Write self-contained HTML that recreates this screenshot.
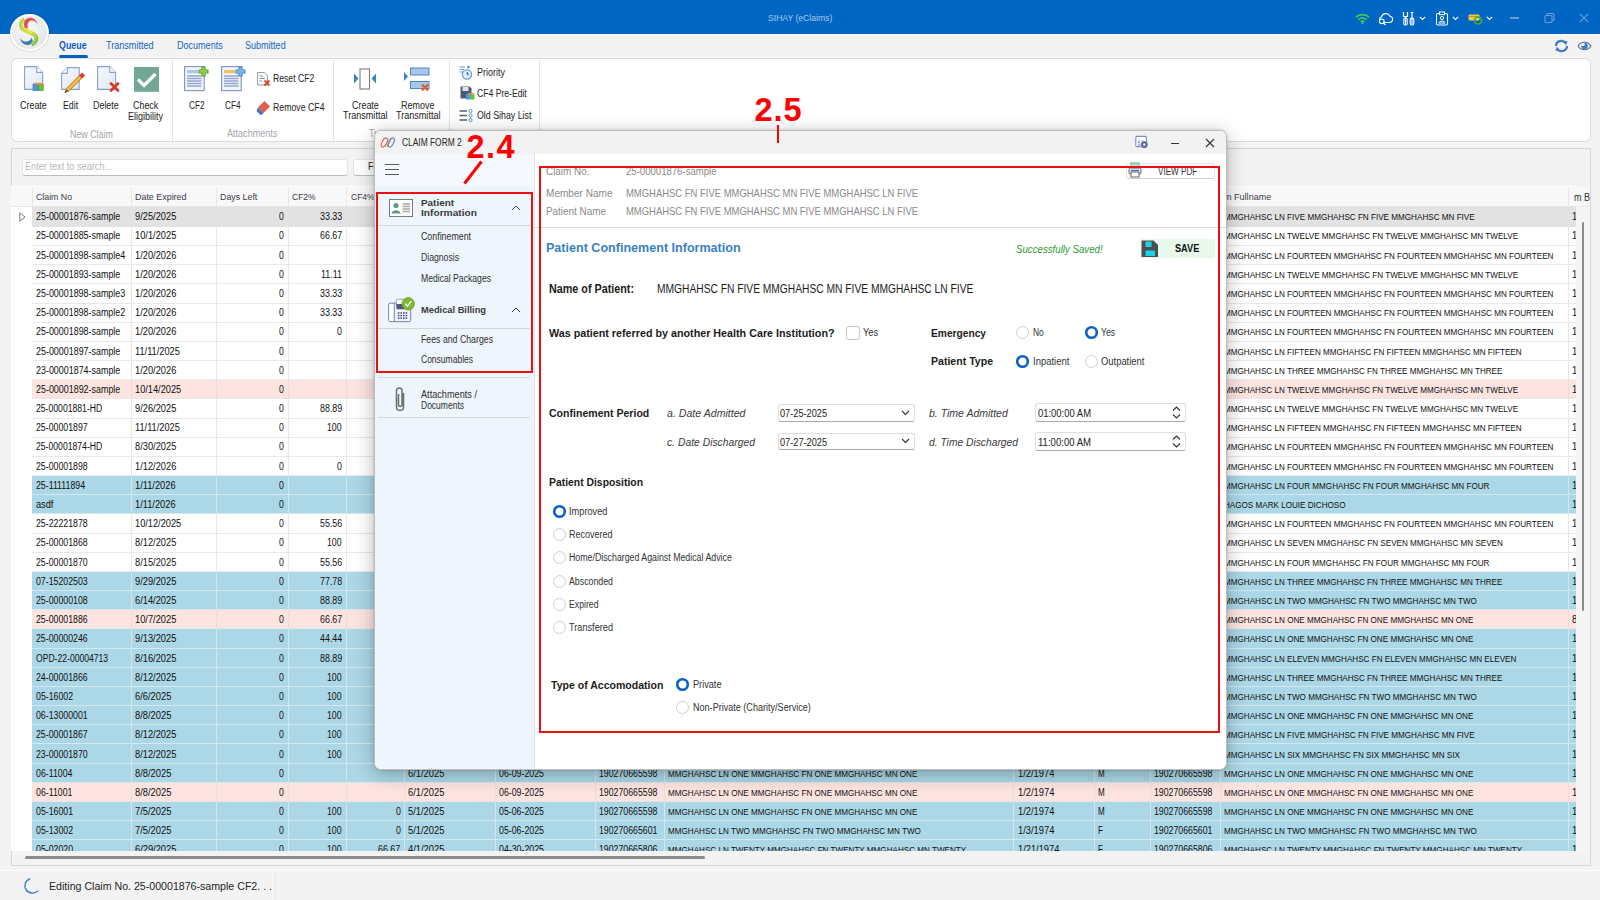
<!DOCTYPE html>
<html><head><meta charset="utf-8"><style>
html,body{margin:0;padding:0;}
body{width:1600px;height:900px;position:relative;overflow:hidden;background:#f3f3f3;font-family:"Liberation Sans",sans-serif;}
.t{position:absolute;white-space:nowrap;}
.r{position:absolute;box-sizing:border-box;}
svg.r{overflow:visible;}
</style></head><body>
<div class="r" style="left:0.00px;top:0.00px;width:1600.00px;height:34.00px;background:#0066c3;"></div>
<div class="r" style="left:0.00px;top:34.00px;width:1600.00px;height:1.00px;background:#fbfbfb;"></div>
<div class="t" style="left:767.80px;top:13.00px;font-size:9.5px;line-height:9.5px;color:#a9c9ee;font-weight:normal;font-style:normal;transform:scaleX(0.9061);transform-origin:0 0;">SIHAY (eClaims)</div>
<div class="r" style="left:10px;top:13.5px;width:38.5px;height:37.5px;border-radius:50%;background:#fff;box-shadow:0 0 1.5px rgba(0,0,0,.3)"></div>
<div class="r" style="left:12px;top:15.5px;width:34.5px;height:33.5px;border-radius:50%;background:radial-gradient(circle at 45% 40%,#f6f6f6,#e0e2e4)"></div>
<svg class="r" style="left:0;top:0" width="60" height="60" viewBox="0 0 60 60"><defs><linearGradient id="lg" x1="0" y1="0" x2="1" y2="1"><stop offset="0" stop-color="#a6d636"/><stop offset=".55" stop-color="#e0dc2c"/><stop offset="1" stop-color="#6cbc3a"/></linearGradient></defs><path d="M20 38.2 C21.5 45 29 47 33 42.5 L31.8 37.5 C30 42.5 23.5 43 20 38.2 Z" fill="#3e78c4"/><path d="M24.5 19.5 C21 21.5 19.8 25.5 22 28.2 C25 31.5 32.5 32.5 35.3 35.8 C37.5 38.5 36 42.5 31.5 44.8" fill="none" stroke="url(#lg)" stroke-width="4"/><path d="M23.5 21 C21.5 23 21 25.8 22.8 27.8 C25.8 30.8 32.5 32 34.6 35.5 C36.2 38.2 35.2 41.5 32.5 43.5" fill="none" stroke="#fff" stroke-opacity=".9" stroke-width="1.3" stroke-dasharray="0.6 1.3"/><path d="M37.6 24.2 C36.5 18 28.5 15.2 25 20.5 C23.5 23 23.8 25.8 24.8 27.8 L28.2 28.5 C27 25.5 27.5 22 30.5 20.8 C33.2 19.8 36 21.5 37.6 24.2 Z" fill="#e54e58"/></svg>
<div class="t" style="left:58.50px;top:40.00px;font-size:10.5px;line-height:10.5px;color:#0e5fbf;font-weight:bold;font-style:normal;transform:scaleX(0.8478);transform-origin:0 0;">Queue</div>
<div class="r" style="left:58.50px;top:55.00px;width:29.50px;height:3.00px;background:#0a5ec0;border-radius:1.5px;"></div>
<div class="t" style="left:106.00px;top:40.00px;font-size:10.5px;line-height:10.5px;color:#1563c4;font-weight:normal;font-style:normal;transform:scaleX(0.8635);transform-origin:0 0;">Transmitted</div>
<div class="t" style="left:176.80px;top:40.00px;font-size:10.5px;line-height:10.5px;color:#1563c4;font-weight:normal;font-style:normal;transform:scaleX(0.8606);transform-origin:0 0;">Documents</div>
<div class="t" style="left:245.00px;top:40.00px;font-size:10.5px;line-height:10.5px;color:#1563c4;font-weight:normal;font-style:normal;transform:scaleX(0.8600);transform-origin:0 0;">Submitted</div>
<svg class="r" style="left:1554px;top:40px;" width="15" height="12" viewBox="0 0 15 12"><path d="M2 6 A5.2 5.2 0 0 1 11.5 3.2" fill="none" stroke="#3d7cc9" stroke-width="2.2"/><path d="M9.2 0.6 L13.6 1.6 L12 5.6 Z" fill="#3d7cc9"/><path d="M13 6 A5.2 5.2 0 0 1 3.5 8.8" fill="none" stroke="#3d7cc9" stroke-width="2.2"/><path d="M5.8 11.4 L1.4 10.4 L3 6.4 Z" fill="#3d7cc9"/></svg>
<svg class="r" style="left:1577px;top:40px;" width="15" height="12" viewBox="0 0 15 12"><path d="M1 6 C4 1 11 1 14 6 C11 11 4 11 1 6 Z" fill="#fff" stroke="#5a6b80" stroke-width="1.1"/><circle cx="7.5" cy="6" r="3.3" fill="#3d7cc9"/><path d="M7.5 6 V2.7 A3.3 3.3 0 0 0 4.2 6 Z" fill="#fff"/></svg>
<div class="r" style="left:10.5px;top:58px;width:1580px;height:83.5px;background:#fff;border:1px solid #dcdcdc;border-radius:6px;"></div>
<div class="r" style="left:172.20px;top:60.00px;width:1.00px;height:80.50px;background:#e4e4e4;"></div>
<div class="r" style="left:333.10px;top:60.00px;width:1.00px;height:80.50px;background:#e4e4e4;"></div>
<div class="r" style="left:448.90px;top:60.00px;width:1.00px;height:80.50px;background:#e4e4e4;"></div>
<div class="r" style="left:538.50px;top:60.00px;width:1.00px;height:80.50px;background:#e4e4e4;"></div>
<svg class="r" style="left:24px;top:66px;" width="20" height="25" viewBox="0 0 20 25"><defs><linearGradient id="dg" x1="0" y1="0" x2="1" y2="1"><stop offset="0" stop-color="#f7f9fd"/><stop offset="1" stop-color="#dfe6f3"/></linearGradient></defs><path d="M0.6 0.6 H12.8 L18.6 6.4 V23.4 H0.6 Z" fill="url(#dg)" stroke="#8b9fd0" stroke-width="1.1"/><path d="M12.8 0.6 V6.4 H18.6" fill="#fff" stroke="#8b9fd0" stroke-width="1.1"/><rect x="9" y="18" width="5" height="6.5" fill="#4a9be0" stroke="#2a6cb8" stroke-width=".6"/><rect x="14.2" y="18.5" width="5" height="6" fill="#68c038" stroke="#3a8a20" stroke-width=".6"/><rect x="11" y="16.8" width="8" height="2" fill="#f08a4a"/></svg>
<svg class="r" style="left:61px;top:67px;" width="24" height="26" viewBox="0 0 24 26"><defs><linearGradient id="dg2" x1="0" y1="0" x2="1" y2="1"><stop offset="0" stop-color="#f7f9fd"/><stop offset="1" stop-color="#dfe6f3"/></linearGradient></defs><path d="M6.4 0.6 H18.2 V22.4 H0.6 V6.4 Z" fill="url(#dg2)" stroke="#8b9fd0" stroke-width="1.1"/><path d="M6.4 0.6 V6.4 H0.6" fill="#fff" stroke="#8b9fd0" stroke-width="1.1"/><path d="M5.5 24 L20.5 9" stroke="#c8841c" stroke-width="4.2"/><path d="M5.5 24 L20.5 9" stroke="#f5c24a" stroke-width="2.4"/><path d="M19.5 10 L22.5 7" stroke="#d83a3a" stroke-width="4.2"/><path d="M4 25.5 L6.5 23" stroke="#333" stroke-width="1.6"/></svg>
<svg class="r" style="left:97px;top:66px;" width="24" height="26" viewBox="0 0 24 26"><defs><linearGradient id="dg3" x1="0" y1="0" x2="1" y2="1"><stop offset="0" stop-color="#f7f9fd"/><stop offset="1" stop-color="#dfe6f3"/></linearGradient></defs><path d="M0.6 0.6 H12.8 L18.6 6.4 V23.4 H0.6 Z" fill="url(#dg3)" stroke="#8b9fd0" stroke-width="1.1"/><path d="M12.8 0.6 V6.4 H18.6" fill="#fff" stroke="#8b9fd0" stroke-width="1.1"/><path d="M14 17.5 L21 24.5 M21 17.5 L14 24.5" stroke="#d83a2a" stroke-width="2.8" stroke-linecap="round"/></svg>
<svg class="r" style="left:134px;top:67px;" width="25" height="25" viewBox="0 0 25 25"><rect x="0" y="0" width="25" height="24.8" fill="#72a794"/><path d="M4 12.5 L10 18.5 L21.5 7" fill="none" stroke="#fff" stroke-width="3.2"/></svg>
<div class="t" style="left:20.01px;top:101.00px;font-size:10px;line-height:10px;color:#222;font-weight:normal;font-style:normal;transform:scaleX(0.8923);transform-origin:0 0;">Create</div>
<div class="t" style="left:62.76px;top:101.00px;font-size:10px;line-height:10px;color:#222;font-weight:normal;font-style:normal;transform:scaleX(0.8755);transform-origin:0 0;">Edit</div>
<div class="t" style="left:93.42px;top:101.00px;font-size:10px;line-height:10px;color:#222;font-weight:normal;font-style:normal;transform:scaleX(0.8913);transform-origin:0 0;">Delete</div>
<div class="t" style="left:133.28px;top:101.00px;font-size:10px;line-height:10px;color:#222;font-weight:normal;font-style:normal;transform:scaleX(0.8907);transform-origin:0 0;">Check</div>
<div class="t" style="left:128.39px;top:112.00px;font-size:10px;line-height:10px;color:#222;font-weight:normal;font-style:normal;transform:scaleX(0.9003);transform-origin:0 0;">Eligibility</div>
<div class="t" style="left:69.62px;top:130.00px;font-size:10px;line-height:10px;color:#a2a6ae;font-weight:normal;font-style:normal;transform:scaleX(0.8845);transform-origin:0 0;">New Claim</div>
<svg class="r" style="left:184px;top:66px;" width="26" height="26" viewBox="0 0 26 26"><rect x="0.6" y="0.6" width="19.6" height="24" fill="#f2f5fb" stroke="#7d93c8" stroke-width="1.1"/><rect x="3" y="4" width="11" height="3.2" fill="#a9c6ee"/><path d="M3 10 H17.5 M3 12.5 H17.5 M3 15 H17.5 M3 17.5 H17.5 M3 20 H17.5" stroke="#95a8d4" stroke-width="1.4"/><path d="M19.5 0.5 V10.5 M14.5 5.5 H24.5" stroke="#5a9a2a" stroke-width="4.2"/><path d="M19.5 1.5 V9.5 M15.5 5.5 H23.5" stroke="#8cd04a" stroke-width="2.4"/></svg>
<svg class="r" style="left:221px;top:66px;" width="26" height="26" viewBox="0 0 26 26"><rect x="0.6" y="0.6" width="19.6" height="24" fill="#f2f5fb" stroke="#7d93c8" stroke-width="1.1"/><rect x="3" y="4" width="11" height="3.2" fill="#f3c15a"/><path d="M3 10 H17.5 M3 12.5 H17.5 M3 15 H17.5 M3 17.5 H17.5 M3 20 H17.5" stroke="#95a8d4" stroke-width="1.4"/><path d="M19.5 0.5 V10.5 M14.5 5.5 H24.5" stroke="#4a82c0" stroke-width="4.2"/><path d="M19.5 1.5 V9.5 M15.5 5.5 H23.5" stroke="#7fb5ea" stroke-width="2.4"/></svg>
<div class="t" style="left:188.70px;top:101.00px;font-size:10px;line-height:10px;color:#222;font-weight:normal;font-style:normal;transform:scaleX(0.8256);transform-origin:0 0;">CF2</div>
<div class="t" style="left:225.20px;top:101.00px;font-size:10px;line-height:10px;color:#222;font-weight:normal;font-style:normal;transform:scaleX(0.8256);transform-origin:0 0;">CF4</div>
<svg class="r" style="left:257px;top:72px;" width="14" height="15" viewBox="0 0 14 15"><path d="M0.6 0.6 H7.5 L10.5 3.6 V13 H0.6 Z" fill="#fff" stroke="#8a8a8a" stroke-width=".9"/><path d="M2.5 4 H6 M2.5 6.5 H8 M2.5 9 H5" stroke="#5a7fc0" stroke-width=".9"/><path d="M7.5 8.5 L12.5 13.5 M12.5 8.5 L7.5 13.5" stroke="#e0432a" stroke-width="1.8"/></svg>
<div class="t" style="left:272.80px;top:74.00px;font-size:10px;line-height:10px;color:#222;font-weight:normal;font-style:normal;transform:scaleX(0.8641);transform-origin:0 0;">Reset CF2</div>
<svg class="r" style="left:256px;top:100px;" width="15" height="15" viewBox="0 0 15 15"><path d="M8.5 1 L14 6.5 L7.5 13 L2 7.5 Z" fill="#e0604a"/><path d="M2 7.5 L7.5 13 L6 14.5 Q5 15.2 4 14.5 L1 11.5 Q0.3 10.5 1 9.5 Z" fill="#3d78c8"/></svg>
<div class="t" style="left:272.80px;top:103.00px;font-size:10px;line-height:10px;color:#222;font-weight:normal;font-style:normal;transform:scaleX(0.8747);transform-origin:0 0;">Remove CF4</div>
<div class="t" style="left:227.42px;top:129.00px;font-size:10px;line-height:10px;color:#a2a6ae;font-weight:normal;font-style:normal;transform:scaleX(0.9062);transform-origin:0 0;">Attachments</div>
<svg class="r" style="left:353px;top:68px;" width="24" height="22" viewBox="0 0 24 22"><rect x="7" y="1" width="9.5" height="20" fill="#fff" stroke="#7a7a7a" stroke-width="1.1"/><path d="M1 5.5 L5.5 10.5 L1 15.5 Z" fill="#3d82c6"/><path d="M23 5.5 L18.5 10.5 L23 15.5 Z" fill="#3d82c6"/></svg>
<svg class="r" style="left:403px;top:67px;" width="30" height="27" viewBox="0 0 30 27"><path d="M1 5 L5 9.5 L1 14 Z" fill="#3d82c6"/><rect x="7.5" y="1" width="18.5" height="7" fill="#a8c6ea" stroke="#4d86c6" stroke-width="1"/><rect x="7.5" y="14.5" width="18.5" height="7" fill="#a8c6ea" stroke="#4d86c6" stroke-width="1"/><path d="M19 17.5 L25 23.5 M25 17.5 L19 23.5" stroke="#e05a2a" stroke-width="2.1"/></svg>
<div class="t" style="left:352.01px;top:101.00px;font-size:10px;line-height:10px;color:#222;font-weight:normal;font-style:normal;transform:scaleX(0.8923);transform-origin:0 0;">Create</div>
<div class="t" style="left:343.17px;top:111.00px;font-size:10px;line-height:10px;color:#222;font-weight:normal;font-style:normal;transform:scaleX(0.9058);transform-origin:0 0;">Transmittal</div>
<div class="t" style="left:401.29px;top:101.00px;font-size:10px;line-height:10px;color:#222;font-weight:normal;font-style:normal;transform:scaleX(0.8977);transform-origin:0 0;">Remove</div>
<div class="t" style="left:395.77px;top:111.00px;font-size:10px;line-height:10px;color:#222;font-weight:normal;font-style:normal;transform:scaleX(0.9058);transform-origin:0 0;">Transmittal</div>
<div class="r" style="left:0;top:120px;width:376px;height:22px;overflow:hidden">
<div class="t" style="left:369.27px;top:9.00px;font-size:10px;line-height:10px;color:#a2a6ae;font-weight:normal;font-style:normal;transform:scaleX(0.9058);transform-origin:0 0;">Transmittal</div>
</div>
<svg class="r" style="left:459px;top:65px;" width="14" height="15" viewBox="0 0 14 15"><path d="M0.5 2 H6 M0.5 4.5 H5 M0.5 7 H4" stroke="#6a9ad6" stroke-width="1.2"/><circle cx="9.5" cy="2" r="1.5" fill="#6a9ad6"/><circle cx="8" cy="9.5" r="4.6" fill="#e3eefa" stroke="#6a9ad6" stroke-width="1.3"/><path d="M8 7 V9.8 H10" stroke="#6a9ad6" stroke-width="1"/></svg>
<div class="t" style="left:476.50px;top:68.00px;font-size:10px;line-height:10px;color:#222;font-weight:normal;font-style:normal;transform:scaleX(0.8953);transform-origin:0 0;">Priority</div>
<svg class="r" style="left:460px;top:86px;" width="15" height="15" viewBox="0 0 15 15"><path d="M0.5 0.5 H9.5 L11.5 2.5 V12.5 H0.5 Z" fill="#4a5a78"/><rect x="2.5" y="1" width="6" height="4" fill="#dfe6f0"/><rect x="6" y="8" width="4" height="5.5" fill="#4a9be0"/><rect x="10" y="8.5" width="4.5" height="5" fill="#68c038"/><rect x="8" y="7" width="6" height="1.5" fill="#f08a4a"/></svg>
<div class="t" style="left:476.50px;top:89.00px;font-size:10px;line-height:10px;color:#222;font-weight:normal;font-style:normal;transform:scaleX(0.8605);transform-origin:0 0;">CF4 Pre-Edit</div>
<svg class="r" style="left:459px;top:109px;" width="15" height="14" viewBox="0 0 15 14"><path d="M0.5 2 H8 M0.5 6.5 H8 M0.5 11 H8" stroke="#5a6270" stroke-width="1.3"/><circle cx="11.5" cy="2" r="1.6" fill="none" stroke="#5a8fd0" stroke-width="1"/><circle cx="11.5" cy="6.5" r="1.6" fill="none" stroke="#5a8fd0" stroke-width="1"/><circle cx="11.5" cy="11" r="1.6" fill="none" stroke="#5a8fd0" stroke-width="1"/></svg>
<div class="t" style="left:476.50px;top:111.00px;font-size:10px;line-height:10px;color:#222;font-weight:normal;font-style:normal;transform:scaleX(0.8809);transform-origin:0 0;">Old Sihay List</div>
<svg class="r" style="left:1355px;top:12px;" width="15" height="12" viewBox="0 0 15 12"><path d="M1 5.2 A9.5 9.5 0 0 1 14 5.2" fill="none" stroke="#45d04a" stroke-width="1.6"/><path d="M3.4 7.6 A6 6 0 0 1 11.6 7.6" fill="none" stroke="#45d04a" stroke-width="1.6"/><path d="M5.6 9.8 A3 3 0 0 1 9.4 9.8" fill="none" stroke="#45d04a" stroke-width="1.6"/><circle cx="7.5" cy="11.2" r="1" fill="#45d04a"/></svg>
<svg class="r" style="left:1378px;top:12px;" width="16" height="14" viewBox="0 0 16 14"><path d="M4.5 10.5 H12 A3.2 3.2 0 0 0 12 4.2 A4.6 4.6 0 0 0 3.5 4.8 A3 3 0 0 0 2.5 10" fill="none" stroke="#fff" stroke-width="1.1"/><circle cx="3.8" cy="9.3" r="2.3" fill="#0066c3" stroke="#fff" stroke-width="1.1"/><path d="M5.4 10.9 L7.5 13" stroke="#fff" stroke-width="1.1"/></svg>
<svg class="r" style="left:1401px;top:11px;" width="16" height="15" viewBox="0 0 16 15"><path d="M2.5 1 V5.5 H6.5 V1 M4.5 5.5 V13.5" fill="none" stroke="#fff" stroke-width="1.2"/><rect x="2.8" y="7" width="3.4" height="7" rx="1.2" fill="none" stroke="#fff" stroke-width="1.1"/><path d="M11 1 V13.5" stroke="#fff" stroke-width="1.2"/><rect x="9.2" y="7" width="3.6" height="7" rx="1.4" fill="none" stroke="#fff" stroke-width="1.1"/><path d="M9.5 1.5 H12.5" stroke="#fff" stroke-width="1.1"/></svg>
<svg class="r" style="left:1435px;top:11px;" width="15" height="15" viewBox="0 0 15 15"><rect x="1.5" y="2.5" width="11" height="11.5" rx="1.5" fill="none" stroke="#fff" stroke-width="1.1"/><rect x="4.5" y="1" width="5" height="2.6" fill="#0066c3" stroke="#fff" stroke-width="1"/><circle cx="7" cy="7" r="1.6" fill="none" stroke="#fff" stroke-width="1"/><path d="M4 12 C4 9.5 10 9.5 10 12 Z" fill="none" stroke="#fff" stroke-width="1"/></svg>
<svg class="r" style="left:1468px;top:13px;" width="15" height="12" viewBox="0 0 15 12"><rect x="0.5" y="1.5" width="11" height="6" rx="1" fill="#f0c848"/><path d="M0.5 3.5 H11.5" stroke="#c89a20" stroke-width="1"/><circle cx="10" cy="7.5" r="3.5" fill="none" stroke="#3ab03a" stroke-width="1.6"/><path d="M12.5 5 L13.8 7 L11.5 7.5 Z" fill="#3ab03a"/></svg>
<svg class="r" style="left:1419px;top:16px;" width="7" height="5" viewBox="0 0 7 5"><path d="M0.8 0.8 L3.5 3.5 L6.2 0.8" fill="none" stroke="#fff" stroke-width="1.1"/></svg>
<svg class="r" style="left:1452px;top:16px;" width="7" height="5" viewBox="0 0 7 5"><path d="M0.8 0.8 L3.5 3.5 L6.2 0.8" fill="none" stroke="#fff" stroke-width="1.1"/></svg>
<svg class="r" style="left:1485.5px;top:16px;" width="7" height="5" viewBox="0 0 7 5"><path d="M0.8 0.8 L3.5 3.5 L6.2 0.8" fill="none" stroke="#fff" stroke-width="1.1"/></svg>
<div class="r" style="left:1510.00px;top:17.40px;width:9.00px;height:1.20px;background:#6b9ad8;"></div>
<svg class="r" style="left:1544px;top:13px;" width="11" height="10" viewBox="0 0 11 10"><rect x="1" y="2.5" width="7" height="7" rx="1" fill="none" stroke="#6b9ad8" stroke-width="1.1"/><path d="M3 2.5 V1.5 A1 1 0 0 1 4 0.5 H9 A1 1 0 0 1 10 1.5 V6.5 A1 1 0 0 1 9 7.5 H8" fill="none" stroke="#6b9ad8" stroke-width="1.1"/></svg>
<svg class="r" style="left:1579px;top:13px;" width="10" height="10" viewBox="0 0 10 10"><path d="M0.8 0.8 L9.2 9.2 M9.2 0.8 L0.8 9.2" stroke="#6b9ad8" stroke-width="1.2"/></svg>
<div class="r" style="left:10.5px;top:147.5px;width:1580px;height:718px;border:1px solid #d6d6d6;background:#f3f3f3"></div>
<div class="r" style="left:22px;top:159px;width:326px;height:16.5px;background:#fff;border:1px solid #e4e4e4;border-bottom:1px solid #bdbdbd;border-radius:3px"></div>
<div class="t" style="left:24.50px;top:162.00px;font-size:10px;line-height:10px;color:#b9b9b9;font-weight:normal;font-style:normal;transform:scaleX(0.9172);transform-origin:0 0;">Enter text to search...</div>
<div class="r" style="left:353px;top:159px;width:60px;height:16.5px;background:#fff;border:1px solid #e4e4e4;border-bottom:1px solid #bdbdbd;border-radius:3px"></div>
<div class="t" style="left:367.80px;top:162.00px;font-size:10px;line-height:10px;color:#222;font-weight:normal;font-style:normal;transform:scaleX(0.8839);transform-origin:0 0;">Find</div>
<div class="r" style="left:11px;top:186px;width:1565px;height:665px;overflow:hidden;background:#fff">
<div class="r" style="left:0.00px;top:0.50px;width:1565.00px;height:20.50px;background:#f8f8f8;"></div>
<div class="r" style="left:0.00px;top:20.00px;width:1565.00px;height:1.00px;background:#e6e6e6;"></div>
<div class="r" style="left:20.50px;top:0.50px;width:1.00px;height:20.50px;background:#e8e8e8;"></div>
<div class="r" style="left:119.90px;top:0.50px;width:1.00px;height:20.50px;background:#e8e8e8;"></div>
<div class="r" style="left:205.10px;top:0.50px;width:1.00px;height:20.50px;background:#e8e8e8;"></div>
<div class="r" style="left:276.50px;top:0.50px;width:1.00px;height:20.50px;background:#e8e8e8;"></div>
<div class="r" style="left:335.20px;top:0.50px;width:1.00px;height:20.50px;background:#e8e8e8;"></div>
<div class="r" style="left:393.10px;top:0.50px;width:1.00px;height:20.50px;background:#e8e8e8;"></div>
<div class="r" style="left:483.80px;top:0.50px;width:1.00px;height:20.50px;background:#e8e8e8;"></div>
<div class="r" style="left:583.50px;top:0.50px;width:1.00px;height:20.50px;background:#e8e8e8;"></div>
<div class="r" style="left:653.20px;top:0.50px;width:1.00px;height:20.50px;background:#e8e8e8;"></div>
<div class="r" style="left:1002.10px;top:0.50px;width:1.00px;height:20.50px;background:#e8e8e8;"></div>
<div class="r" style="left:1082.90px;top:0.50px;width:1.00px;height:20.50px;background:#e8e8e8;"></div>
<div class="r" style="left:1138.90px;top:0.50px;width:1.00px;height:20.50px;background:#e8e8e8;"></div>
<div class="r" style="left:1208.90px;top:0.50px;width:1.00px;height:20.50px;background:#e8e8e8;"></div>
<div class="r" style="left:1556.80px;top:0.50px;width:1.00px;height:20.50px;background:#e8e8e8;"></div>
<div class="t" style="left:25.00px;top:6.00px;font-size:9.6px;line-height:9.6px;color:#3a3d48;font-weight:normal;font-style:normal;transform:scaleX(0.9148);transform-origin:0 0;">Claim No</div>
<div class="t" style="left:124.40px;top:6.00px;font-size:9.6px;line-height:9.6px;color:#3a3d48;font-weight:normal;font-style:normal;transform:scaleX(0.9285);transform-origin:0 0;">Date Expired</div>
<div class="t" style="left:209.30px;top:6.00px;font-size:9.6px;line-height:9.6px;color:#3a3d48;font-weight:normal;font-style:normal;transform:scaleX(0.9207);transform-origin:0 0;">Days Left</div>
<div class="t" style="left:281.40px;top:6.00px;font-size:9.6px;line-height:9.6px;color:#3a3d48;font-weight:normal;font-style:normal;transform:scaleX(0.8848);transform-origin:0 0;">CF2%</div>
<div class="t" style="left:339.70px;top:6.00px;font-size:9.6px;line-height:9.6px;color:#3a3d48;font-weight:normal;font-style:normal;transform:scaleX(0.8848);transform-origin:0 0;">CF4%</div>
<div class="t" style="left:397.60px;top:6.00px;font-size:9.6px;line-height:9.6px;color:#3a3d48;font-weight:normal;font-style:normal;transform:scaleX(0.9312);transform-origin:0 0;">Date Admitted</div>
<div class="t" style="left:488.00px;top:6.00px;font-size:9.6px;line-height:9.6px;color:#3a3d48;font-weight:normal;font-style:normal;transform:scaleX(0.9343);transform-origin:0 0;">Date Discharged</div>
<div class="t" style="left:587.50px;top:6.00px;font-size:9.6px;line-height:9.6px;color:#3a3d48;font-weight:normal;font-style:normal;transform:scaleX(0.9039);transform-origin:0 0;">Member PIN</div>
<div class="t" style="left:657.00px;top:6.00px;font-size:9.6px;line-height:9.6px;color:#3a3d48;font-weight:normal;font-style:normal;transform:scaleX(0.9362);transform-origin:0 0;">Member Fullname</div>
<div class="t" style="left:1006.50px;top:6.00px;font-size:9.6px;line-height:9.6px;color:#3a3d48;font-weight:normal;font-style:normal;transform:scaleX(0.9350);transform-origin:0 0;">Member Birthdate</div>
<div class="t" style="left:1087.00px;top:6.00px;font-size:9.6px;line-height:9.6px;color:#3a3d48;font-weight:normal;font-style:normal;transform:scaleX(0.9256);transform-origin:0 0;">Member Sex</div>
<div class="t" style="left:1143.00px;top:6.00px;font-size:9.6px;line-height:9.6px;color:#3a3d48;font-weight:normal;font-style:normal;transform:scaleX(0.9019);transform-origin:0 0;">Patient PIN</div>
<div class="t" style="left:1213.00px;top:6.00px;font-size:9.6px;line-height:9.6px;color:#3a3d48;font-weight:normal;font-style:normal;transform:scaleX(0.9432);transform-origin:0 0;">m Fullname</div>
<div class="r" style="left:21.00px;top:21.00px;width:1544.00px;height:19.97px;background:#e2e2e2;"></div>
<div class="r" style="left:21.00px;top:39.97px;width:1544.00px;height:1.00px;background:#e2e2e2;"></div>
<div class="t" style="left:24.80px;top:26.00px;font-size:10px;line-height:10px;color:#111;font-weight:normal;font-style:normal;transform:scaleX(0.8921);transform-origin:0 0;">25-00001876-sample</div>
<div class="t" style="left:124.00px;top:26.00px;font-size:10px;line-height:10px;color:#111;font-weight:normal;font-style:normal;transform:scaleX(0.9281);transform-origin:0 0;">9/25/2025</div>
<div class="t" style="left:267.93px;top:26.00px;font-size:10px;line-height:10px;color:#111;font-weight:normal;font-style:normal;transform:scaleX(0.8750);transform-origin:0 0;">0</div>
<div class="t" style="left:308.76px;top:26.00px;font-size:10px;line-height:10px;color:#111;font-weight:normal;font-style:normal;transform:scaleX(0.8889);transform-origin:0 0;">33.33</div>
<div class="t" style="left:1213.00px;top:27.00px;font-size:9.3px;line-height:9.3px;color:#111;font-weight:normal;font-style:normal;transform:scaleX(0.8729);transform-origin:0 0;">MMGHAHSC LN FIVE MMGHAHSC FN FIVE MMGHAHSC MN FIVE</div>
<div class="t" style="left:1561.00px;top:26.00px;font-size:10px;line-height:10px;color:#111;font-weight:normal;font-style:normal;transform:scaleX(0.9357);transform-origin:0 0;">1/5/1974</div>
<div class="r" style="left:21.00px;top:40.97px;width:1544.00px;height:19.16px;background:#ffffff;"></div>
<div class="r" style="left:21.00px;top:59.13px;width:1544.00px;height:1.00px;background:#e9e9e9;"></div>
<div class="r" style="left:119.90px;top:40.97px;width:1.00px;height:19.16px;background:#e8e8e8;"></div>
<div class="r" style="left:205.10px;top:40.97px;width:1.00px;height:19.16px;background:#e8e8e8;"></div>
<div class="r" style="left:276.50px;top:40.97px;width:1.00px;height:19.16px;background:#e8e8e8;"></div>
<div class="r" style="left:335.20px;top:40.97px;width:1.00px;height:19.16px;background:#e8e8e8;"></div>
<div class="r" style="left:393.10px;top:40.97px;width:1.00px;height:19.16px;background:#e8e8e8;"></div>
<div class="r" style="left:483.80px;top:40.97px;width:1.00px;height:19.16px;background:#e8e8e8;"></div>
<div class="r" style="left:583.50px;top:40.97px;width:1.00px;height:19.16px;background:#e8e8e8;"></div>
<div class="r" style="left:653.20px;top:40.97px;width:1.00px;height:19.16px;background:#e8e8e8;"></div>
<div class="r" style="left:1002.10px;top:40.97px;width:1.00px;height:19.16px;background:#e8e8e8;"></div>
<div class="r" style="left:1082.90px;top:40.97px;width:1.00px;height:19.16px;background:#e8e8e8;"></div>
<div class="r" style="left:1138.90px;top:40.97px;width:1.00px;height:19.16px;background:#e8e8e8;"></div>
<div class="r" style="left:1208.90px;top:40.97px;width:1.00px;height:19.16px;background:#e8e8e8;"></div>
<div class="r" style="left:1556.80px;top:40.97px;width:1.00px;height:19.16px;background:#e8e8e8;"></div>
<div class="t" style="left:24.80px;top:45.00px;font-size:10px;line-height:10px;color:#111;font-weight:normal;font-style:normal;transform:scaleX(0.8921);transform-origin:0 0;">25-00001885-smaple</div>
<div class="t" style="left:124.00px;top:45.00px;font-size:10px;line-height:10px;color:#111;font-weight:normal;font-style:normal;transform:scaleX(0.9281);transform-origin:0 0;">10/1/2025</div>
<div class="t" style="left:267.93px;top:45.00px;font-size:10px;line-height:10px;color:#111;font-weight:normal;font-style:normal;transform:scaleX(0.8750);transform-origin:0 0;">0</div>
<div class="t" style="left:308.76px;top:45.00px;font-size:10px;line-height:10px;color:#111;font-weight:normal;font-style:normal;transform:scaleX(0.8889);transform-origin:0 0;">66.67</div>
<div class="t" style="left:1213.00px;top:46.00px;font-size:9.3px;line-height:9.3px;color:#111;font-weight:normal;font-style:normal;transform:scaleX(0.8718);transform-origin:0 0;">MMGHAHSC LN TWELVE MMGHAHSC FN TWELVE MMGHAHSC MN TWELVE</div>
<div class="t" style="left:1561.00px;top:45.00px;font-size:10px;line-height:10px;color:#111;font-weight:normal;font-style:normal;transform:scaleX(0.9357);transform-origin:0 0;">1/5/1974</div>
<div class="r" style="left:21.00px;top:60.13px;width:1544.00px;height:19.17px;background:#ffffff;"></div>
<div class="r" style="left:21.00px;top:78.30px;width:1544.00px;height:1.00px;background:#e9e9e9;"></div>
<div class="r" style="left:119.90px;top:60.13px;width:1.00px;height:19.17px;background:#e8e8e8;"></div>
<div class="r" style="left:205.10px;top:60.13px;width:1.00px;height:19.17px;background:#e8e8e8;"></div>
<div class="r" style="left:276.50px;top:60.13px;width:1.00px;height:19.17px;background:#e8e8e8;"></div>
<div class="r" style="left:335.20px;top:60.13px;width:1.00px;height:19.17px;background:#e8e8e8;"></div>
<div class="r" style="left:393.10px;top:60.13px;width:1.00px;height:19.17px;background:#e8e8e8;"></div>
<div class="r" style="left:483.80px;top:60.13px;width:1.00px;height:19.17px;background:#e8e8e8;"></div>
<div class="r" style="left:583.50px;top:60.13px;width:1.00px;height:19.17px;background:#e8e8e8;"></div>
<div class="r" style="left:653.20px;top:60.13px;width:1.00px;height:19.17px;background:#e8e8e8;"></div>
<div class="r" style="left:1002.10px;top:60.13px;width:1.00px;height:19.17px;background:#e8e8e8;"></div>
<div class="r" style="left:1082.90px;top:60.13px;width:1.00px;height:19.17px;background:#e8e8e8;"></div>
<div class="r" style="left:1138.90px;top:60.13px;width:1.00px;height:19.17px;background:#e8e8e8;"></div>
<div class="r" style="left:1208.90px;top:60.13px;width:1.00px;height:19.17px;background:#e8e8e8;"></div>
<div class="r" style="left:1556.80px;top:60.13px;width:1.00px;height:19.17px;background:#e8e8e8;"></div>
<div class="t" style="left:24.80px;top:65.00px;font-size:10px;line-height:10px;color:#111;font-weight:normal;font-style:normal;transform:scaleX(0.8912);transform-origin:0 0;">25-00001898-sample4</div>
<div class="t" style="left:124.00px;top:65.00px;font-size:10px;line-height:10px;color:#111;font-weight:normal;font-style:normal;transform:scaleX(0.9281);transform-origin:0 0;">1/20/2026</div>
<div class="t" style="left:267.93px;top:65.00px;font-size:10px;line-height:10px;color:#111;font-weight:normal;font-style:normal;transform:scaleX(0.8750);transform-origin:0 0;">0</div>
<div class="t" style="left:1213.00px;top:66.00px;font-size:9.3px;line-height:9.3px;color:#111;font-weight:normal;font-style:normal;transform:scaleX(0.8712);transform-origin:0 0;">MMGHAHSC LN FOURTEEN MMGHAHSC FN FOURTEEN MMGHAHSC MN FOURTEEN</div>
<div class="t" style="left:1561.00px;top:65.00px;font-size:10px;line-height:10px;color:#111;font-weight:normal;font-style:normal;transform:scaleX(0.9357);transform-origin:0 0;">1/5/1974</div>
<div class="r" style="left:21.00px;top:79.30px;width:1544.00px;height:19.17px;background:#ffffff;"></div>
<div class="r" style="left:21.00px;top:97.46px;width:1544.00px;height:1.00px;background:#e9e9e9;"></div>
<div class="r" style="left:119.90px;top:79.30px;width:1.00px;height:19.17px;background:#e8e8e8;"></div>
<div class="r" style="left:205.10px;top:79.30px;width:1.00px;height:19.17px;background:#e8e8e8;"></div>
<div class="r" style="left:276.50px;top:79.30px;width:1.00px;height:19.17px;background:#e8e8e8;"></div>
<div class="r" style="left:335.20px;top:79.30px;width:1.00px;height:19.17px;background:#e8e8e8;"></div>
<div class="r" style="left:393.10px;top:79.30px;width:1.00px;height:19.17px;background:#e8e8e8;"></div>
<div class="r" style="left:483.80px;top:79.30px;width:1.00px;height:19.17px;background:#e8e8e8;"></div>
<div class="r" style="left:583.50px;top:79.30px;width:1.00px;height:19.17px;background:#e8e8e8;"></div>
<div class="r" style="left:653.20px;top:79.30px;width:1.00px;height:19.17px;background:#e8e8e8;"></div>
<div class="r" style="left:1002.10px;top:79.30px;width:1.00px;height:19.17px;background:#e8e8e8;"></div>
<div class="r" style="left:1082.90px;top:79.30px;width:1.00px;height:19.17px;background:#e8e8e8;"></div>
<div class="r" style="left:1138.90px;top:79.30px;width:1.00px;height:19.17px;background:#e8e8e8;"></div>
<div class="r" style="left:1208.90px;top:79.30px;width:1.00px;height:19.17px;background:#e8e8e8;"></div>
<div class="r" style="left:1556.80px;top:79.30px;width:1.00px;height:19.17px;background:#e8e8e8;"></div>
<div class="t" style="left:24.80px;top:84.00px;font-size:10px;line-height:10px;color:#111;font-weight:normal;font-style:normal;transform:scaleX(0.8921);transform-origin:0 0;">25-00001893-sample</div>
<div class="t" style="left:124.00px;top:84.00px;font-size:10px;line-height:10px;color:#111;font-weight:normal;font-style:normal;transform:scaleX(0.9281);transform-origin:0 0;">1/20/2026</div>
<div class="t" style="left:267.93px;top:84.00px;font-size:10px;line-height:10px;color:#111;font-weight:normal;font-style:normal;transform:scaleX(0.8750);transform-origin:0 0;">0</div>
<div class="t" style="left:310.08px;top:84.00px;font-size:10px;line-height:10px;color:#111;font-weight:normal;font-style:normal;transform:scaleX(0.8889);transform-origin:0 0;">11.11</div>
<div class="t" style="left:1213.00px;top:85.00px;font-size:9.3px;line-height:9.3px;color:#111;font-weight:normal;font-style:normal;transform:scaleX(0.8718);transform-origin:0 0;">MMGHAHSC LN TWELVE MMGHAHSC FN TWELVE MMGHAHSC MN TWELVE</div>
<div class="t" style="left:1561.00px;top:84.00px;font-size:10px;line-height:10px;color:#111;font-weight:normal;font-style:normal;transform:scaleX(0.9357);transform-origin:0 0;">1/5/1974</div>
<div class="r" style="left:21.00px;top:98.46px;width:1544.00px;height:19.17px;background:#ffffff;"></div>
<div class="r" style="left:21.00px;top:116.63px;width:1544.00px;height:1.00px;background:#e9e9e9;"></div>
<div class="r" style="left:119.90px;top:98.46px;width:1.00px;height:19.17px;background:#e8e8e8;"></div>
<div class="r" style="left:205.10px;top:98.46px;width:1.00px;height:19.17px;background:#e8e8e8;"></div>
<div class="r" style="left:276.50px;top:98.46px;width:1.00px;height:19.17px;background:#e8e8e8;"></div>
<div class="r" style="left:335.20px;top:98.46px;width:1.00px;height:19.17px;background:#e8e8e8;"></div>
<div class="r" style="left:393.10px;top:98.46px;width:1.00px;height:19.17px;background:#e8e8e8;"></div>
<div class="r" style="left:483.80px;top:98.46px;width:1.00px;height:19.17px;background:#e8e8e8;"></div>
<div class="r" style="left:583.50px;top:98.46px;width:1.00px;height:19.17px;background:#e8e8e8;"></div>
<div class="r" style="left:653.20px;top:98.46px;width:1.00px;height:19.17px;background:#e8e8e8;"></div>
<div class="r" style="left:1002.10px;top:98.46px;width:1.00px;height:19.17px;background:#e8e8e8;"></div>
<div class="r" style="left:1082.90px;top:98.46px;width:1.00px;height:19.17px;background:#e8e8e8;"></div>
<div class="r" style="left:1138.90px;top:98.46px;width:1.00px;height:19.17px;background:#e8e8e8;"></div>
<div class="r" style="left:1208.90px;top:98.46px;width:1.00px;height:19.17px;background:#e8e8e8;"></div>
<div class="r" style="left:1556.80px;top:98.46px;width:1.00px;height:19.17px;background:#e8e8e8;"></div>
<div class="t" style="left:24.80px;top:103.00px;font-size:10px;line-height:10px;color:#111;font-weight:normal;font-style:normal;transform:scaleX(0.8912);transform-origin:0 0;">25-00001898-sample3</div>
<div class="t" style="left:124.00px;top:103.00px;font-size:10px;line-height:10px;color:#111;font-weight:normal;font-style:normal;transform:scaleX(0.9281);transform-origin:0 0;">1/20/2026</div>
<div class="t" style="left:267.93px;top:103.00px;font-size:10px;line-height:10px;color:#111;font-weight:normal;font-style:normal;transform:scaleX(0.8750);transform-origin:0 0;">0</div>
<div class="t" style="left:308.76px;top:103.00px;font-size:10px;line-height:10px;color:#111;font-weight:normal;font-style:normal;transform:scaleX(0.8889);transform-origin:0 0;">33.33</div>
<div class="t" style="left:1213.00px;top:104.00px;font-size:9.3px;line-height:9.3px;color:#111;font-weight:normal;font-style:normal;transform:scaleX(0.8712);transform-origin:0 0;">MMGHAHSC LN FOURTEEN MMGHAHSC FN FOURTEEN MMGHAHSC MN FOURTEEN</div>
<div class="t" style="left:1561.00px;top:103.00px;font-size:10px;line-height:10px;color:#111;font-weight:normal;font-style:normal;transform:scaleX(0.9357);transform-origin:0 0;">1/5/1974</div>
<div class="r" style="left:21.00px;top:117.62px;width:1544.00px;height:19.17px;background:#ffffff;"></div>
<div class="r" style="left:21.00px;top:135.79px;width:1544.00px;height:1.00px;background:#e9e9e9;"></div>
<div class="r" style="left:119.90px;top:117.62px;width:1.00px;height:19.17px;background:#e8e8e8;"></div>
<div class="r" style="left:205.10px;top:117.62px;width:1.00px;height:19.17px;background:#e8e8e8;"></div>
<div class="r" style="left:276.50px;top:117.62px;width:1.00px;height:19.17px;background:#e8e8e8;"></div>
<div class="r" style="left:335.20px;top:117.62px;width:1.00px;height:19.17px;background:#e8e8e8;"></div>
<div class="r" style="left:393.10px;top:117.62px;width:1.00px;height:19.17px;background:#e8e8e8;"></div>
<div class="r" style="left:483.80px;top:117.62px;width:1.00px;height:19.17px;background:#e8e8e8;"></div>
<div class="r" style="left:583.50px;top:117.62px;width:1.00px;height:19.17px;background:#e8e8e8;"></div>
<div class="r" style="left:653.20px;top:117.62px;width:1.00px;height:19.17px;background:#e8e8e8;"></div>
<div class="r" style="left:1002.10px;top:117.62px;width:1.00px;height:19.17px;background:#e8e8e8;"></div>
<div class="r" style="left:1082.90px;top:117.62px;width:1.00px;height:19.17px;background:#e8e8e8;"></div>
<div class="r" style="left:1138.90px;top:117.62px;width:1.00px;height:19.17px;background:#e8e8e8;"></div>
<div class="r" style="left:1208.90px;top:117.62px;width:1.00px;height:19.17px;background:#e8e8e8;"></div>
<div class="r" style="left:1556.80px;top:117.62px;width:1.00px;height:19.17px;background:#e8e8e8;"></div>
<div class="t" style="left:24.80px;top:122.00px;font-size:10px;line-height:10px;color:#111;font-weight:normal;font-style:normal;transform:scaleX(0.8912);transform-origin:0 0;">25-00001898-sample2</div>
<div class="t" style="left:124.00px;top:122.00px;font-size:10px;line-height:10px;color:#111;font-weight:normal;font-style:normal;transform:scaleX(0.9281);transform-origin:0 0;">1/20/2026</div>
<div class="t" style="left:267.93px;top:122.00px;font-size:10px;line-height:10px;color:#111;font-weight:normal;font-style:normal;transform:scaleX(0.8750);transform-origin:0 0;">0</div>
<div class="t" style="left:308.76px;top:122.00px;font-size:10px;line-height:10px;color:#111;font-weight:normal;font-style:normal;transform:scaleX(0.8889);transform-origin:0 0;">33.33</div>
<div class="t" style="left:1213.00px;top:123.00px;font-size:9.3px;line-height:9.3px;color:#111;font-weight:normal;font-style:normal;transform:scaleX(0.8712);transform-origin:0 0;">MMGHAHSC LN FOURTEEN MMGHAHSC FN FOURTEEN MMGHAHSC MN FOURTEEN</div>
<div class="t" style="left:1561.00px;top:122.00px;font-size:10px;line-height:10px;color:#111;font-weight:normal;font-style:normal;transform:scaleX(0.9357);transform-origin:0 0;">1/5/1974</div>
<div class="r" style="left:21.00px;top:136.79px;width:1544.00px;height:19.17px;background:#ffffff;"></div>
<div class="r" style="left:21.00px;top:154.96px;width:1544.00px;height:1.00px;background:#e9e9e9;"></div>
<div class="r" style="left:119.90px;top:136.79px;width:1.00px;height:19.17px;background:#e8e8e8;"></div>
<div class="r" style="left:205.10px;top:136.79px;width:1.00px;height:19.17px;background:#e8e8e8;"></div>
<div class="r" style="left:276.50px;top:136.79px;width:1.00px;height:19.17px;background:#e8e8e8;"></div>
<div class="r" style="left:335.20px;top:136.79px;width:1.00px;height:19.17px;background:#e8e8e8;"></div>
<div class="r" style="left:393.10px;top:136.79px;width:1.00px;height:19.17px;background:#e8e8e8;"></div>
<div class="r" style="left:483.80px;top:136.79px;width:1.00px;height:19.17px;background:#e8e8e8;"></div>
<div class="r" style="left:583.50px;top:136.79px;width:1.00px;height:19.17px;background:#e8e8e8;"></div>
<div class="r" style="left:653.20px;top:136.79px;width:1.00px;height:19.17px;background:#e8e8e8;"></div>
<div class="r" style="left:1002.10px;top:136.79px;width:1.00px;height:19.17px;background:#e8e8e8;"></div>
<div class="r" style="left:1082.90px;top:136.79px;width:1.00px;height:19.17px;background:#e8e8e8;"></div>
<div class="r" style="left:1138.90px;top:136.79px;width:1.00px;height:19.17px;background:#e8e8e8;"></div>
<div class="r" style="left:1208.90px;top:136.79px;width:1.00px;height:19.17px;background:#e8e8e8;"></div>
<div class="r" style="left:1556.80px;top:136.79px;width:1.00px;height:19.17px;background:#e8e8e8;"></div>
<div class="t" style="left:24.80px;top:141.00px;font-size:10px;line-height:10px;color:#111;font-weight:normal;font-style:normal;transform:scaleX(0.8921);transform-origin:0 0;">25-00001898-sample</div>
<div class="t" style="left:124.00px;top:141.00px;font-size:10px;line-height:10px;color:#111;font-weight:normal;font-style:normal;transform:scaleX(0.9281);transform-origin:0 0;">1/20/2026</div>
<div class="t" style="left:267.93px;top:141.00px;font-size:10px;line-height:10px;color:#111;font-weight:normal;font-style:normal;transform:scaleX(0.8750);transform-origin:0 0;">0</div>
<div class="t" style="left:326.13px;top:141.00px;font-size:10px;line-height:10px;color:#111;font-weight:normal;font-style:normal;transform:scaleX(0.8750);transform-origin:0 0;">0</div>
<div class="t" style="left:1213.00px;top:142.00px;font-size:9.3px;line-height:9.3px;color:#111;font-weight:normal;font-style:normal;transform:scaleX(0.8712);transform-origin:0 0;">MMGHAHSC LN FOURTEEN MMGHAHSC FN FOURTEEN MMGHAHSC MN FOURTEEN</div>
<div class="t" style="left:1561.00px;top:141.00px;font-size:10px;line-height:10px;color:#111;font-weight:normal;font-style:normal;transform:scaleX(0.9357);transform-origin:0 0;">1/5/1974</div>
<div class="r" style="left:21.00px;top:155.96px;width:1544.00px;height:19.17px;background:#ffffff;"></div>
<div class="r" style="left:21.00px;top:174.12px;width:1544.00px;height:1.00px;background:#e9e9e9;"></div>
<div class="r" style="left:119.90px;top:155.96px;width:1.00px;height:19.17px;background:#e8e8e8;"></div>
<div class="r" style="left:205.10px;top:155.96px;width:1.00px;height:19.17px;background:#e8e8e8;"></div>
<div class="r" style="left:276.50px;top:155.96px;width:1.00px;height:19.17px;background:#e8e8e8;"></div>
<div class="r" style="left:335.20px;top:155.96px;width:1.00px;height:19.17px;background:#e8e8e8;"></div>
<div class="r" style="left:393.10px;top:155.96px;width:1.00px;height:19.17px;background:#e8e8e8;"></div>
<div class="r" style="left:483.80px;top:155.96px;width:1.00px;height:19.17px;background:#e8e8e8;"></div>
<div class="r" style="left:583.50px;top:155.96px;width:1.00px;height:19.17px;background:#e8e8e8;"></div>
<div class="r" style="left:653.20px;top:155.96px;width:1.00px;height:19.17px;background:#e8e8e8;"></div>
<div class="r" style="left:1002.10px;top:155.96px;width:1.00px;height:19.17px;background:#e8e8e8;"></div>
<div class="r" style="left:1082.90px;top:155.96px;width:1.00px;height:19.17px;background:#e8e8e8;"></div>
<div class="r" style="left:1138.90px;top:155.96px;width:1.00px;height:19.17px;background:#e8e8e8;"></div>
<div class="r" style="left:1208.90px;top:155.96px;width:1.00px;height:19.17px;background:#e8e8e8;"></div>
<div class="r" style="left:1556.80px;top:155.96px;width:1.00px;height:19.17px;background:#e8e8e8;"></div>
<div class="t" style="left:24.80px;top:161.00px;font-size:10px;line-height:10px;color:#111;font-weight:normal;font-style:normal;transform:scaleX(0.8921);transform-origin:0 0;">25-00001897-sample</div>
<div class="t" style="left:124.00px;top:161.00px;font-size:10px;line-height:10px;color:#111;font-weight:normal;font-style:normal;transform:scaleX(0.9222);transform-origin:0 0;">11/11/2025</div>
<div class="t" style="left:267.93px;top:161.00px;font-size:10px;line-height:10px;color:#111;font-weight:normal;font-style:normal;transform:scaleX(0.8750);transform-origin:0 0;">0</div>
<div class="t" style="left:1213.00px;top:162.00px;font-size:9.3px;line-height:9.3px;color:#111;font-weight:normal;font-style:normal;transform:scaleX(0.8718);transform-origin:0 0;">MMGHAHSC LN FIFTEEN MMGHAHSC FN FIFTEEN MMGHAHSC MN FIFTEEN</div>
<div class="t" style="left:1561.00px;top:161.00px;font-size:10px;line-height:10px;color:#111;font-weight:normal;font-style:normal;transform:scaleX(0.9357);transform-origin:0 0;">1/5/1974</div>
<div class="r" style="left:21.00px;top:175.12px;width:1544.00px;height:19.17px;background:#ffffff;"></div>
<div class="r" style="left:21.00px;top:193.29px;width:1544.00px;height:1.00px;background:#e9e9e9;"></div>
<div class="r" style="left:119.90px;top:175.12px;width:1.00px;height:19.17px;background:#e8e8e8;"></div>
<div class="r" style="left:205.10px;top:175.12px;width:1.00px;height:19.17px;background:#e8e8e8;"></div>
<div class="r" style="left:276.50px;top:175.12px;width:1.00px;height:19.17px;background:#e8e8e8;"></div>
<div class="r" style="left:335.20px;top:175.12px;width:1.00px;height:19.17px;background:#e8e8e8;"></div>
<div class="r" style="left:393.10px;top:175.12px;width:1.00px;height:19.17px;background:#e8e8e8;"></div>
<div class="r" style="left:483.80px;top:175.12px;width:1.00px;height:19.17px;background:#e8e8e8;"></div>
<div class="r" style="left:583.50px;top:175.12px;width:1.00px;height:19.17px;background:#e8e8e8;"></div>
<div class="r" style="left:653.20px;top:175.12px;width:1.00px;height:19.17px;background:#e8e8e8;"></div>
<div class="r" style="left:1002.10px;top:175.12px;width:1.00px;height:19.17px;background:#e8e8e8;"></div>
<div class="r" style="left:1082.90px;top:175.12px;width:1.00px;height:19.17px;background:#e8e8e8;"></div>
<div class="r" style="left:1138.90px;top:175.12px;width:1.00px;height:19.17px;background:#e8e8e8;"></div>
<div class="r" style="left:1208.90px;top:175.12px;width:1.00px;height:19.17px;background:#e8e8e8;"></div>
<div class="r" style="left:1556.80px;top:175.12px;width:1.00px;height:19.17px;background:#e8e8e8;"></div>
<div class="t" style="left:24.80px;top:180.00px;font-size:10px;line-height:10px;color:#111;font-weight:normal;font-style:normal;transform:scaleX(0.8921);transform-origin:0 0;">23-00001874-sample</div>
<div class="t" style="left:124.00px;top:180.00px;font-size:10px;line-height:10px;color:#111;font-weight:normal;font-style:normal;transform:scaleX(0.9281);transform-origin:0 0;">1/20/2026</div>
<div class="t" style="left:267.93px;top:180.00px;font-size:10px;line-height:10px;color:#111;font-weight:normal;font-style:normal;transform:scaleX(0.8750);transform-origin:0 0;">0</div>
<div class="t" style="left:1213.00px;top:181.00px;font-size:9.3px;line-height:9.3px;color:#111;font-weight:normal;font-style:normal;transform:scaleX(0.8722);transform-origin:0 0;">MMGHAHSC LN THREE MMGHAHSC FN THREE MMGHAHSC MN THREE</div>
<div class="t" style="left:1561.00px;top:180.00px;font-size:10px;line-height:10px;color:#111;font-weight:normal;font-style:normal;transform:scaleX(0.9357);transform-origin:0 0;">1/5/1974</div>
<div class="r" style="left:21.00px;top:194.28px;width:1544.00px;height:19.17px;background:#fde4e1;"></div>
<div class="r" style="left:21.00px;top:212.45px;width:1544.00px;height:1.00px;background:#ece4e3;"></div>
<div class="r" style="left:119.90px;top:194.28px;width:1.00px;height:19.17px;background:#eddcdc;"></div>
<div class="r" style="left:205.10px;top:194.28px;width:1.00px;height:19.17px;background:#eddcdc;"></div>
<div class="r" style="left:276.50px;top:194.28px;width:1.00px;height:19.17px;background:#eddcdc;"></div>
<div class="r" style="left:335.20px;top:194.28px;width:1.00px;height:19.17px;background:#eddcdc;"></div>
<div class="r" style="left:393.10px;top:194.28px;width:1.00px;height:19.17px;background:#eddcdc;"></div>
<div class="r" style="left:483.80px;top:194.28px;width:1.00px;height:19.17px;background:#eddcdc;"></div>
<div class="r" style="left:583.50px;top:194.28px;width:1.00px;height:19.17px;background:#eddcdc;"></div>
<div class="r" style="left:653.20px;top:194.28px;width:1.00px;height:19.17px;background:#eddcdc;"></div>
<div class="r" style="left:1002.10px;top:194.28px;width:1.00px;height:19.17px;background:#eddcdc;"></div>
<div class="r" style="left:1082.90px;top:194.28px;width:1.00px;height:19.17px;background:#eddcdc;"></div>
<div class="r" style="left:1138.90px;top:194.28px;width:1.00px;height:19.17px;background:#eddcdc;"></div>
<div class="r" style="left:1208.90px;top:194.28px;width:1.00px;height:19.17px;background:#eddcdc;"></div>
<div class="r" style="left:1556.80px;top:194.28px;width:1.00px;height:19.17px;background:#eddcdc;"></div>
<div class="t" style="left:24.80px;top:199.00px;font-size:10px;line-height:10px;color:#111;font-weight:normal;font-style:normal;transform:scaleX(0.8921);transform-origin:0 0;">25-00001892-sample</div>
<div class="t" style="left:124.00px;top:199.00px;font-size:10px;line-height:10px;color:#111;font-weight:normal;font-style:normal;transform:scaleX(0.9222);transform-origin:0 0;">10/14/2025</div>
<div class="t" style="left:267.93px;top:199.00px;font-size:10px;line-height:10px;color:#111;font-weight:normal;font-style:normal;transform:scaleX(0.8750);transform-origin:0 0;">0</div>
<div class="t" style="left:1213.00px;top:200.00px;font-size:9.3px;line-height:9.3px;color:#111;font-weight:normal;font-style:normal;transform:scaleX(0.8718);transform-origin:0 0;">MMGHAHSC LN TWELVE MMGHAHSC FN TWELVE MMGHAHSC MN TWELVE</div>
<div class="t" style="left:1561.00px;top:199.00px;font-size:10px;line-height:10px;color:#111;font-weight:normal;font-style:normal;transform:scaleX(0.9357);transform-origin:0 0;">1/5/1974</div>
<div class="r" style="left:21.00px;top:213.45px;width:1544.00px;height:19.17px;background:#ffffff;"></div>
<div class="r" style="left:21.00px;top:231.62px;width:1544.00px;height:1.00px;background:#e9e9e9;"></div>
<div class="r" style="left:119.90px;top:213.45px;width:1.00px;height:19.17px;background:#e8e8e8;"></div>
<div class="r" style="left:205.10px;top:213.45px;width:1.00px;height:19.17px;background:#e8e8e8;"></div>
<div class="r" style="left:276.50px;top:213.45px;width:1.00px;height:19.17px;background:#e8e8e8;"></div>
<div class="r" style="left:335.20px;top:213.45px;width:1.00px;height:19.17px;background:#e8e8e8;"></div>
<div class="r" style="left:393.10px;top:213.45px;width:1.00px;height:19.17px;background:#e8e8e8;"></div>
<div class="r" style="left:483.80px;top:213.45px;width:1.00px;height:19.17px;background:#e8e8e8;"></div>
<div class="r" style="left:583.50px;top:213.45px;width:1.00px;height:19.17px;background:#e8e8e8;"></div>
<div class="r" style="left:653.20px;top:213.45px;width:1.00px;height:19.17px;background:#e8e8e8;"></div>
<div class="r" style="left:1002.10px;top:213.45px;width:1.00px;height:19.17px;background:#e8e8e8;"></div>
<div class="r" style="left:1082.90px;top:213.45px;width:1.00px;height:19.17px;background:#e8e8e8;"></div>
<div class="r" style="left:1138.90px;top:213.45px;width:1.00px;height:19.17px;background:#e8e8e8;"></div>
<div class="r" style="left:1208.90px;top:213.45px;width:1.00px;height:19.17px;background:#e8e8e8;"></div>
<div class="r" style="left:1556.80px;top:213.45px;width:1.00px;height:19.17px;background:#e8e8e8;"></div>
<div class="t" style="left:24.80px;top:218.00px;font-size:10px;line-height:10px;color:#111;font-weight:normal;font-style:normal;transform:scaleX(0.8640);transform-origin:0 0;">25-00001881-HD</div>
<div class="t" style="left:124.00px;top:218.00px;font-size:10px;line-height:10px;color:#111;font-weight:normal;font-style:normal;transform:scaleX(0.9281);transform-origin:0 0;">9/26/2025</div>
<div class="t" style="left:267.93px;top:218.00px;font-size:10px;line-height:10px;color:#111;font-weight:normal;font-style:normal;transform:scaleX(0.8750);transform-origin:0 0;">0</div>
<div class="t" style="left:308.76px;top:218.00px;font-size:10px;line-height:10px;color:#111;font-weight:normal;font-style:normal;transform:scaleX(0.8889);transform-origin:0 0;">88.89</div>
<div class="t" style="left:1213.00px;top:219.00px;font-size:9.3px;line-height:9.3px;color:#111;font-weight:normal;font-style:normal;transform:scaleX(0.8718);transform-origin:0 0;">MMGHAHSC LN TWELVE MMGHAHSC FN TWELVE MMGHAHSC MN TWELVE</div>
<div class="t" style="left:1561.00px;top:218.00px;font-size:10px;line-height:10px;color:#111;font-weight:normal;font-style:normal;transform:scaleX(0.9357);transform-origin:0 0;">1/5/1974</div>
<div class="r" style="left:21.00px;top:232.62px;width:1544.00px;height:19.17px;background:#ffffff;"></div>
<div class="r" style="left:21.00px;top:250.78px;width:1544.00px;height:1.00px;background:#e9e9e9;"></div>
<div class="r" style="left:119.90px;top:232.62px;width:1.00px;height:19.17px;background:#e8e8e8;"></div>
<div class="r" style="left:205.10px;top:232.62px;width:1.00px;height:19.17px;background:#e8e8e8;"></div>
<div class="r" style="left:276.50px;top:232.62px;width:1.00px;height:19.17px;background:#e8e8e8;"></div>
<div class="r" style="left:335.20px;top:232.62px;width:1.00px;height:19.17px;background:#e8e8e8;"></div>
<div class="r" style="left:393.10px;top:232.62px;width:1.00px;height:19.17px;background:#e8e8e8;"></div>
<div class="r" style="left:483.80px;top:232.62px;width:1.00px;height:19.17px;background:#e8e8e8;"></div>
<div class="r" style="left:583.50px;top:232.62px;width:1.00px;height:19.17px;background:#e8e8e8;"></div>
<div class="r" style="left:653.20px;top:232.62px;width:1.00px;height:19.17px;background:#e8e8e8;"></div>
<div class="r" style="left:1002.10px;top:232.62px;width:1.00px;height:19.17px;background:#e8e8e8;"></div>
<div class="r" style="left:1082.90px;top:232.62px;width:1.00px;height:19.17px;background:#e8e8e8;"></div>
<div class="r" style="left:1138.90px;top:232.62px;width:1.00px;height:19.17px;background:#e8e8e8;"></div>
<div class="r" style="left:1208.90px;top:232.62px;width:1.00px;height:19.17px;background:#e8e8e8;"></div>
<div class="r" style="left:1556.80px;top:232.62px;width:1.00px;height:19.17px;background:#e8e8e8;"></div>
<div class="t" style="left:24.80px;top:237.00px;font-size:10px;line-height:10px;color:#111;font-weight:normal;font-style:normal;transform:scaleX(0.8764);transform-origin:0 0;">25-00001897</div>
<div class="t" style="left:124.00px;top:237.00px;font-size:10px;line-height:10px;color:#111;font-weight:normal;font-style:normal;transform:scaleX(0.9222);transform-origin:0 0;">11/11/2025</div>
<div class="t" style="left:267.93px;top:237.00px;font-size:10px;line-height:10px;color:#111;font-weight:normal;font-style:normal;transform:scaleX(0.8750);transform-origin:0 0;">0</div>
<div class="t" style="left:316.40px;top:237.00px;font-size:10px;line-height:10px;color:#111;font-weight:normal;font-style:normal;transform:scaleX(0.8750);transform-origin:0 0;">100</div>
<div class="t" style="left:1213.00px;top:238.00px;font-size:9.3px;line-height:9.3px;color:#111;font-weight:normal;font-style:normal;transform:scaleX(0.8718);transform-origin:0 0;">MMGHAHSC LN FIFTEEN MMGHAHSC FN FIFTEEN MMGHAHSC MN FIFTEEN</div>
<div class="t" style="left:1561.00px;top:237.00px;font-size:10px;line-height:10px;color:#111;font-weight:normal;font-style:normal;transform:scaleX(0.9357);transform-origin:0 0;">1/5/1974</div>
<div class="r" style="left:21.00px;top:251.78px;width:1544.00px;height:19.17px;background:#ffffff;"></div>
<div class="r" style="left:21.00px;top:269.94px;width:1544.00px;height:1.00px;background:#e9e9e9;"></div>
<div class="r" style="left:119.90px;top:251.78px;width:1.00px;height:19.17px;background:#e8e8e8;"></div>
<div class="r" style="left:205.10px;top:251.78px;width:1.00px;height:19.17px;background:#e8e8e8;"></div>
<div class="r" style="left:276.50px;top:251.78px;width:1.00px;height:19.17px;background:#e8e8e8;"></div>
<div class="r" style="left:335.20px;top:251.78px;width:1.00px;height:19.17px;background:#e8e8e8;"></div>
<div class="r" style="left:393.10px;top:251.78px;width:1.00px;height:19.17px;background:#e8e8e8;"></div>
<div class="r" style="left:483.80px;top:251.78px;width:1.00px;height:19.17px;background:#e8e8e8;"></div>
<div class="r" style="left:583.50px;top:251.78px;width:1.00px;height:19.17px;background:#e8e8e8;"></div>
<div class="r" style="left:653.20px;top:251.78px;width:1.00px;height:19.17px;background:#e8e8e8;"></div>
<div class="r" style="left:1002.10px;top:251.78px;width:1.00px;height:19.17px;background:#e8e8e8;"></div>
<div class="r" style="left:1082.90px;top:251.78px;width:1.00px;height:19.17px;background:#e8e8e8;"></div>
<div class="r" style="left:1138.90px;top:251.78px;width:1.00px;height:19.17px;background:#e8e8e8;"></div>
<div class="r" style="left:1208.90px;top:251.78px;width:1.00px;height:19.17px;background:#e8e8e8;"></div>
<div class="r" style="left:1556.80px;top:251.78px;width:1.00px;height:19.17px;background:#e8e8e8;"></div>
<div class="t" style="left:24.80px;top:256.00px;font-size:10px;line-height:10px;color:#111;font-weight:normal;font-style:normal;transform:scaleX(0.8640);transform-origin:0 0;">25-00001874-HD</div>
<div class="t" style="left:124.00px;top:256.00px;font-size:10px;line-height:10px;color:#111;font-weight:normal;font-style:normal;transform:scaleX(0.9281);transform-origin:0 0;">8/30/2025</div>
<div class="t" style="left:267.93px;top:256.00px;font-size:10px;line-height:10px;color:#111;font-weight:normal;font-style:normal;transform:scaleX(0.8750);transform-origin:0 0;">0</div>
<div class="t" style="left:1213.00px;top:257.00px;font-size:9.3px;line-height:9.3px;color:#111;font-weight:normal;font-style:normal;transform:scaleX(0.8712);transform-origin:0 0;">MMGHAHSC LN FOURTEEN MMGHAHSC FN FOURTEEN MMGHAHSC MN FOURTEEN</div>
<div class="t" style="left:1561.00px;top:256.00px;font-size:10px;line-height:10px;color:#111;font-weight:normal;font-style:normal;transform:scaleX(0.9357);transform-origin:0 0;">1/5/1974</div>
<div class="r" style="left:21.00px;top:270.94px;width:1544.00px;height:19.17px;background:#ffffff;"></div>
<div class="r" style="left:21.00px;top:289.11px;width:1544.00px;height:1.00px;background:#e9e9e9;"></div>
<div class="r" style="left:119.90px;top:270.94px;width:1.00px;height:19.17px;background:#e8e8e8;"></div>
<div class="r" style="left:205.10px;top:270.94px;width:1.00px;height:19.17px;background:#e8e8e8;"></div>
<div class="r" style="left:276.50px;top:270.94px;width:1.00px;height:19.17px;background:#e8e8e8;"></div>
<div class="r" style="left:335.20px;top:270.94px;width:1.00px;height:19.17px;background:#e8e8e8;"></div>
<div class="r" style="left:393.10px;top:270.94px;width:1.00px;height:19.17px;background:#e8e8e8;"></div>
<div class="r" style="left:483.80px;top:270.94px;width:1.00px;height:19.17px;background:#e8e8e8;"></div>
<div class="r" style="left:583.50px;top:270.94px;width:1.00px;height:19.17px;background:#e8e8e8;"></div>
<div class="r" style="left:653.20px;top:270.94px;width:1.00px;height:19.17px;background:#e8e8e8;"></div>
<div class="r" style="left:1002.10px;top:270.94px;width:1.00px;height:19.17px;background:#e8e8e8;"></div>
<div class="r" style="left:1082.90px;top:270.94px;width:1.00px;height:19.17px;background:#e8e8e8;"></div>
<div class="r" style="left:1138.90px;top:270.94px;width:1.00px;height:19.17px;background:#e8e8e8;"></div>
<div class="r" style="left:1208.90px;top:270.94px;width:1.00px;height:19.17px;background:#e8e8e8;"></div>
<div class="r" style="left:1556.80px;top:270.94px;width:1.00px;height:19.17px;background:#e8e8e8;"></div>
<div class="t" style="left:24.80px;top:276.00px;font-size:10px;line-height:10px;color:#111;font-weight:normal;font-style:normal;transform:scaleX(0.8764);transform-origin:0 0;">25-00001898</div>
<div class="t" style="left:124.00px;top:276.00px;font-size:10px;line-height:10px;color:#111;font-weight:normal;font-style:normal;transform:scaleX(0.9281);transform-origin:0 0;">1/12/2026</div>
<div class="t" style="left:267.93px;top:276.00px;font-size:10px;line-height:10px;color:#111;font-weight:normal;font-style:normal;transform:scaleX(0.8750);transform-origin:0 0;">0</div>
<div class="t" style="left:326.13px;top:276.00px;font-size:10px;line-height:10px;color:#111;font-weight:normal;font-style:normal;transform:scaleX(0.8750);transform-origin:0 0;">0</div>
<div class="t" style="left:1213.00px;top:277.00px;font-size:9.3px;line-height:9.3px;color:#111;font-weight:normal;font-style:normal;transform:scaleX(0.8712);transform-origin:0 0;">MMGHAHSC LN FOURTEEN MMGHAHSC FN FOURTEEN MMGHAHSC MN FOURTEEN</div>
<div class="t" style="left:1561.00px;top:276.00px;font-size:10px;line-height:10px;color:#111;font-weight:normal;font-style:normal;transform:scaleX(0.9357);transform-origin:0 0;">1/5/1974</div>
<div class="r" style="left:21.00px;top:290.11px;width:1544.00px;height:19.17px;background:#acd7e6;"></div>
<div class="r" style="left:21.00px;top:308.28px;width:1544.00px;height:1.00px;background:#d7e7ee;"></div>
<div class="r" style="left:119.90px;top:290.11px;width:1.00px;height:19.17px;background:#d3e6ee;"></div>
<div class="r" style="left:205.10px;top:290.11px;width:1.00px;height:19.17px;background:#d3e6ee;"></div>
<div class="r" style="left:276.50px;top:290.11px;width:1.00px;height:19.17px;background:#d3e6ee;"></div>
<div class="r" style="left:335.20px;top:290.11px;width:1.00px;height:19.17px;background:#d3e6ee;"></div>
<div class="r" style="left:393.10px;top:290.11px;width:1.00px;height:19.17px;background:#d3e6ee;"></div>
<div class="r" style="left:483.80px;top:290.11px;width:1.00px;height:19.17px;background:#d3e6ee;"></div>
<div class="r" style="left:583.50px;top:290.11px;width:1.00px;height:19.17px;background:#d3e6ee;"></div>
<div class="r" style="left:653.20px;top:290.11px;width:1.00px;height:19.17px;background:#d3e6ee;"></div>
<div class="r" style="left:1002.10px;top:290.11px;width:1.00px;height:19.17px;background:#d3e6ee;"></div>
<div class="r" style="left:1082.90px;top:290.11px;width:1.00px;height:19.17px;background:#d3e6ee;"></div>
<div class="r" style="left:1138.90px;top:290.11px;width:1.00px;height:19.17px;background:#d3e6ee;"></div>
<div class="r" style="left:1208.90px;top:290.11px;width:1.00px;height:19.17px;background:#d3e6ee;"></div>
<div class="r" style="left:1556.80px;top:290.11px;width:1.00px;height:19.17px;background:#d3e6ee;"></div>
<div class="t" style="left:24.80px;top:295.00px;font-size:10px;line-height:10px;color:#111;font-weight:normal;font-style:normal;transform:scaleX(0.8764);transform-origin:0 0;">25-11111894</div>
<div class="t" style="left:124.00px;top:295.00px;font-size:10px;line-height:10px;color:#111;font-weight:normal;font-style:normal;transform:scaleX(0.9281);transform-origin:0 0;">1/11/2026</div>
<div class="t" style="left:267.93px;top:295.00px;font-size:10px;line-height:10px;color:#111;font-weight:normal;font-style:normal;transform:scaleX(0.8750);transform-origin:0 0;">0</div>
<div class="t" style="left:1213.00px;top:296.00px;font-size:9.3px;line-height:9.3px;color:#111;font-weight:normal;font-style:normal;transform:scaleX(0.8725);transform-origin:0 0;">MMGHAHSC LN FOUR MMGHAHSC FN FOUR MMGHAHSC MN FOUR</div>
<div class="t" style="left:1561.00px;top:295.00px;font-size:10px;line-height:10px;color:#111;font-weight:normal;font-style:normal;transform:scaleX(0.9357);transform-origin:0 0;">1/5/1974</div>
<div class="r" style="left:21.00px;top:309.27px;width:1544.00px;height:19.16px;background:#acd7e6;"></div>
<div class="r" style="left:21.00px;top:327.44px;width:1544.00px;height:1.00px;background:#d7e7ee;"></div>
<div class="r" style="left:119.90px;top:309.27px;width:1.00px;height:19.16px;background:#d3e6ee;"></div>
<div class="r" style="left:205.10px;top:309.27px;width:1.00px;height:19.16px;background:#d3e6ee;"></div>
<div class="r" style="left:276.50px;top:309.27px;width:1.00px;height:19.16px;background:#d3e6ee;"></div>
<div class="r" style="left:335.20px;top:309.27px;width:1.00px;height:19.16px;background:#d3e6ee;"></div>
<div class="r" style="left:393.10px;top:309.27px;width:1.00px;height:19.16px;background:#d3e6ee;"></div>
<div class="r" style="left:483.80px;top:309.27px;width:1.00px;height:19.16px;background:#d3e6ee;"></div>
<div class="r" style="left:583.50px;top:309.27px;width:1.00px;height:19.16px;background:#d3e6ee;"></div>
<div class="r" style="left:653.20px;top:309.27px;width:1.00px;height:19.16px;background:#d3e6ee;"></div>
<div class="r" style="left:1002.10px;top:309.27px;width:1.00px;height:19.16px;background:#d3e6ee;"></div>
<div class="r" style="left:1082.90px;top:309.27px;width:1.00px;height:19.16px;background:#d3e6ee;"></div>
<div class="r" style="left:1138.90px;top:309.27px;width:1.00px;height:19.16px;background:#d3e6ee;"></div>
<div class="r" style="left:1208.90px;top:309.27px;width:1.00px;height:19.16px;background:#d3e6ee;"></div>
<div class="r" style="left:1556.80px;top:309.27px;width:1.00px;height:19.16px;background:#d3e6ee;"></div>
<div class="t" style="left:24.80px;top:314.00px;font-size:10px;line-height:10px;color:#111;font-weight:normal;font-style:normal;transform:scaleX(0.9200);transform-origin:0 0;">asdf</div>
<div class="t" style="left:124.00px;top:314.00px;font-size:10px;line-height:10px;color:#111;font-weight:normal;font-style:normal;transform:scaleX(0.9281);transform-origin:0 0;">1/11/2026</div>
<div class="t" style="left:267.93px;top:314.00px;font-size:10px;line-height:10px;color:#111;font-weight:normal;font-style:normal;transform:scaleX(0.8750);transform-origin:0 0;">0</div>
<div class="t" style="left:1213.00px;top:315.00px;font-size:9.3px;line-height:9.3px;color:#111;font-weight:normal;font-style:normal;transform:scaleX(0.8713);transform-origin:0 0;">HAGOS MARK LOUIE DICHOSO</div>
<div class="t" style="left:1561.00px;top:314.00px;font-size:10px;line-height:10px;color:#111;font-weight:normal;font-style:normal;transform:scaleX(0.9357);transform-origin:0 0;">1/5/1974</div>
<div class="r" style="left:21.00px;top:328.44px;width:1544.00px;height:19.16px;background:#ffffff;"></div>
<div class="r" style="left:21.00px;top:346.61px;width:1544.00px;height:1.00px;background:#e9e9e9;"></div>
<div class="r" style="left:119.90px;top:328.44px;width:1.00px;height:19.16px;background:#e8e8e8;"></div>
<div class="r" style="left:205.10px;top:328.44px;width:1.00px;height:19.16px;background:#e8e8e8;"></div>
<div class="r" style="left:276.50px;top:328.44px;width:1.00px;height:19.16px;background:#e8e8e8;"></div>
<div class="r" style="left:335.20px;top:328.44px;width:1.00px;height:19.16px;background:#e8e8e8;"></div>
<div class="r" style="left:393.10px;top:328.44px;width:1.00px;height:19.16px;background:#e8e8e8;"></div>
<div class="r" style="left:483.80px;top:328.44px;width:1.00px;height:19.16px;background:#e8e8e8;"></div>
<div class="r" style="left:583.50px;top:328.44px;width:1.00px;height:19.16px;background:#e8e8e8;"></div>
<div class="r" style="left:653.20px;top:328.44px;width:1.00px;height:19.16px;background:#e8e8e8;"></div>
<div class="r" style="left:1002.10px;top:328.44px;width:1.00px;height:19.16px;background:#e8e8e8;"></div>
<div class="r" style="left:1082.90px;top:328.44px;width:1.00px;height:19.16px;background:#e8e8e8;"></div>
<div class="r" style="left:1138.90px;top:328.44px;width:1.00px;height:19.16px;background:#e8e8e8;"></div>
<div class="r" style="left:1208.90px;top:328.44px;width:1.00px;height:19.16px;background:#e8e8e8;"></div>
<div class="r" style="left:1556.80px;top:328.44px;width:1.00px;height:19.16px;background:#e8e8e8;"></div>
<div class="t" style="left:24.80px;top:333.00px;font-size:10px;line-height:10px;color:#111;font-weight:normal;font-style:normal;transform:scaleX(0.8764);transform-origin:0 0;">25-22221878</div>
<div class="t" style="left:124.00px;top:333.00px;font-size:10px;line-height:10px;color:#111;font-weight:normal;font-style:normal;transform:scaleX(0.9222);transform-origin:0 0;">10/12/2025</div>
<div class="t" style="left:267.93px;top:333.00px;font-size:10px;line-height:10px;color:#111;font-weight:normal;font-style:normal;transform:scaleX(0.8750);transform-origin:0 0;">0</div>
<div class="t" style="left:308.76px;top:333.00px;font-size:10px;line-height:10px;color:#111;font-weight:normal;font-style:normal;transform:scaleX(0.8889);transform-origin:0 0;">55.56</div>
<div class="t" style="left:1213.00px;top:334.00px;font-size:9.3px;line-height:9.3px;color:#111;font-weight:normal;font-style:normal;transform:scaleX(0.8712);transform-origin:0 0;">MMGHAHSC LN FOURTEEN MMGHAHSC FN FOURTEEN MMGHAHSC MN FOURTEEN</div>
<div class="t" style="left:1561.00px;top:333.00px;font-size:10px;line-height:10px;color:#111;font-weight:normal;font-style:normal;transform:scaleX(0.9357);transform-origin:0 0;">1/5/1974</div>
<div class="r" style="left:21.00px;top:347.61px;width:1544.00px;height:19.16px;background:#ffffff;"></div>
<div class="r" style="left:21.00px;top:365.77px;width:1544.00px;height:1.00px;background:#e9e9e9;"></div>
<div class="r" style="left:119.90px;top:347.61px;width:1.00px;height:19.16px;background:#e8e8e8;"></div>
<div class="r" style="left:205.10px;top:347.61px;width:1.00px;height:19.16px;background:#e8e8e8;"></div>
<div class="r" style="left:276.50px;top:347.61px;width:1.00px;height:19.16px;background:#e8e8e8;"></div>
<div class="r" style="left:335.20px;top:347.61px;width:1.00px;height:19.16px;background:#e8e8e8;"></div>
<div class="r" style="left:393.10px;top:347.61px;width:1.00px;height:19.16px;background:#e8e8e8;"></div>
<div class="r" style="left:483.80px;top:347.61px;width:1.00px;height:19.16px;background:#e8e8e8;"></div>
<div class="r" style="left:583.50px;top:347.61px;width:1.00px;height:19.16px;background:#e8e8e8;"></div>
<div class="r" style="left:653.20px;top:347.61px;width:1.00px;height:19.16px;background:#e8e8e8;"></div>
<div class="r" style="left:1002.10px;top:347.61px;width:1.00px;height:19.16px;background:#e8e8e8;"></div>
<div class="r" style="left:1082.90px;top:347.61px;width:1.00px;height:19.16px;background:#e8e8e8;"></div>
<div class="r" style="left:1138.90px;top:347.61px;width:1.00px;height:19.16px;background:#e8e8e8;"></div>
<div class="r" style="left:1208.90px;top:347.61px;width:1.00px;height:19.16px;background:#e8e8e8;"></div>
<div class="r" style="left:1556.80px;top:347.61px;width:1.00px;height:19.16px;background:#e8e8e8;"></div>
<div class="t" style="left:24.80px;top:352.00px;font-size:10px;line-height:10px;color:#111;font-weight:normal;font-style:normal;transform:scaleX(0.8764);transform-origin:0 0;">25-00001868</div>
<div class="t" style="left:124.00px;top:352.00px;font-size:10px;line-height:10px;color:#111;font-weight:normal;font-style:normal;transform:scaleX(0.9281);transform-origin:0 0;">8/12/2025</div>
<div class="t" style="left:267.93px;top:352.00px;font-size:10px;line-height:10px;color:#111;font-weight:normal;font-style:normal;transform:scaleX(0.8750);transform-origin:0 0;">0</div>
<div class="t" style="left:316.40px;top:352.00px;font-size:10px;line-height:10px;color:#111;font-weight:normal;font-style:normal;transform:scaleX(0.8750);transform-origin:0 0;">100</div>
<div class="t" style="left:1213.00px;top:353.00px;font-size:9.3px;line-height:9.3px;color:#111;font-weight:normal;font-style:normal;transform:scaleX(0.8722);transform-origin:0 0;">MMGHAHSC LN SEVEN MMGHAHSC FN SEVEN MMGHAHSC MN SEVEN</div>
<div class="t" style="left:1561.00px;top:352.00px;font-size:10px;line-height:10px;color:#111;font-weight:normal;font-style:normal;transform:scaleX(0.9357);transform-origin:0 0;">1/5/1974</div>
<div class="r" style="left:21.00px;top:366.77px;width:1544.00px;height:19.16px;background:#ffffff;"></div>
<div class="r" style="left:21.00px;top:384.93px;width:1544.00px;height:1.00px;background:#e9e9e9;"></div>
<div class="r" style="left:119.90px;top:366.77px;width:1.00px;height:19.16px;background:#e8e8e8;"></div>
<div class="r" style="left:205.10px;top:366.77px;width:1.00px;height:19.16px;background:#e8e8e8;"></div>
<div class="r" style="left:276.50px;top:366.77px;width:1.00px;height:19.16px;background:#e8e8e8;"></div>
<div class="r" style="left:335.20px;top:366.77px;width:1.00px;height:19.16px;background:#e8e8e8;"></div>
<div class="r" style="left:393.10px;top:366.77px;width:1.00px;height:19.16px;background:#e8e8e8;"></div>
<div class="r" style="left:483.80px;top:366.77px;width:1.00px;height:19.16px;background:#e8e8e8;"></div>
<div class="r" style="left:583.50px;top:366.77px;width:1.00px;height:19.16px;background:#e8e8e8;"></div>
<div class="r" style="left:653.20px;top:366.77px;width:1.00px;height:19.16px;background:#e8e8e8;"></div>
<div class="r" style="left:1002.10px;top:366.77px;width:1.00px;height:19.16px;background:#e8e8e8;"></div>
<div class="r" style="left:1082.90px;top:366.77px;width:1.00px;height:19.16px;background:#e8e8e8;"></div>
<div class="r" style="left:1138.90px;top:366.77px;width:1.00px;height:19.16px;background:#e8e8e8;"></div>
<div class="r" style="left:1208.90px;top:366.77px;width:1.00px;height:19.16px;background:#e8e8e8;"></div>
<div class="r" style="left:1556.80px;top:366.77px;width:1.00px;height:19.16px;background:#e8e8e8;"></div>
<div class="t" style="left:24.80px;top:372.00px;font-size:10px;line-height:10px;color:#111;font-weight:normal;font-style:normal;transform:scaleX(0.8764);transform-origin:0 0;">25-00001870</div>
<div class="t" style="left:124.00px;top:372.00px;font-size:10px;line-height:10px;color:#111;font-weight:normal;font-style:normal;transform:scaleX(0.9281);transform-origin:0 0;">8/15/2025</div>
<div class="t" style="left:267.93px;top:372.00px;font-size:10px;line-height:10px;color:#111;font-weight:normal;font-style:normal;transform:scaleX(0.8750);transform-origin:0 0;">0</div>
<div class="t" style="left:308.76px;top:372.00px;font-size:10px;line-height:10px;color:#111;font-weight:normal;font-style:normal;transform:scaleX(0.8889);transform-origin:0 0;">55.56</div>
<div class="t" style="left:1213.00px;top:373.00px;font-size:9.3px;line-height:9.3px;color:#111;font-weight:normal;font-style:normal;transform:scaleX(0.8725);transform-origin:0 0;">MMGHAHSC LN FOUR MMGHAHSC FN FOUR MMGHAHSC MN FOUR</div>
<div class="t" style="left:1561.00px;top:372.00px;font-size:10px;line-height:10px;color:#111;font-weight:normal;font-style:normal;transform:scaleX(0.9357);transform-origin:0 0;">1/5/1974</div>
<div class="r" style="left:21.00px;top:385.93px;width:1544.00px;height:19.16px;background:#acd7e6;"></div>
<div class="r" style="left:21.00px;top:404.10px;width:1544.00px;height:1.00px;background:#d7e7ee;"></div>
<div class="r" style="left:119.90px;top:385.93px;width:1.00px;height:19.16px;background:#d3e6ee;"></div>
<div class="r" style="left:205.10px;top:385.93px;width:1.00px;height:19.16px;background:#d3e6ee;"></div>
<div class="r" style="left:276.50px;top:385.93px;width:1.00px;height:19.16px;background:#d3e6ee;"></div>
<div class="r" style="left:335.20px;top:385.93px;width:1.00px;height:19.16px;background:#d3e6ee;"></div>
<div class="r" style="left:393.10px;top:385.93px;width:1.00px;height:19.16px;background:#d3e6ee;"></div>
<div class="r" style="left:483.80px;top:385.93px;width:1.00px;height:19.16px;background:#d3e6ee;"></div>
<div class="r" style="left:583.50px;top:385.93px;width:1.00px;height:19.16px;background:#d3e6ee;"></div>
<div class="r" style="left:653.20px;top:385.93px;width:1.00px;height:19.16px;background:#d3e6ee;"></div>
<div class="r" style="left:1002.10px;top:385.93px;width:1.00px;height:19.16px;background:#d3e6ee;"></div>
<div class="r" style="left:1082.90px;top:385.93px;width:1.00px;height:19.16px;background:#d3e6ee;"></div>
<div class="r" style="left:1138.90px;top:385.93px;width:1.00px;height:19.16px;background:#d3e6ee;"></div>
<div class="r" style="left:1208.90px;top:385.93px;width:1.00px;height:19.16px;background:#d3e6ee;"></div>
<div class="r" style="left:1556.80px;top:385.93px;width:1.00px;height:19.16px;background:#d3e6ee;"></div>
<div class="t" style="left:24.80px;top:391.00px;font-size:10px;line-height:10px;color:#111;font-weight:normal;font-style:normal;transform:scaleX(0.8764);transform-origin:0 0;">07-15202503</div>
<div class="t" style="left:124.00px;top:391.00px;font-size:10px;line-height:10px;color:#111;font-weight:normal;font-style:normal;transform:scaleX(0.9281);transform-origin:0 0;">9/29/2025</div>
<div class="t" style="left:267.93px;top:391.00px;font-size:10px;line-height:10px;color:#111;font-weight:normal;font-style:normal;transform:scaleX(0.8750);transform-origin:0 0;">0</div>
<div class="t" style="left:308.76px;top:391.00px;font-size:10px;line-height:10px;color:#111;font-weight:normal;font-style:normal;transform:scaleX(0.8889);transform-origin:0 0;">77.78</div>
<div class="t" style="left:1213.00px;top:392.00px;font-size:9.3px;line-height:9.3px;color:#111;font-weight:normal;font-style:normal;transform:scaleX(0.8722);transform-origin:0 0;">MMGHAHSC LN THREE MMGHAHSC FN THREE MMGHAHSC MN THREE</div>
<div class="t" style="left:1561.00px;top:391.00px;font-size:10px;line-height:10px;color:#111;font-weight:normal;font-style:normal;transform:scaleX(0.9357);transform-origin:0 0;">1/5/1974</div>
<div class="r" style="left:21.00px;top:405.10px;width:1544.00px;height:19.16px;background:#acd7e6;"></div>
<div class="r" style="left:21.00px;top:423.26px;width:1544.00px;height:1.00px;background:#d7e7ee;"></div>
<div class="r" style="left:119.90px;top:405.10px;width:1.00px;height:19.16px;background:#d3e6ee;"></div>
<div class="r" style="left:205.10px;top:405.10px;width:1.00px;height:19.16px;background:#d3e6ee;"></div>
<div class="r" style="left:276.50px;top:405.10px;width:1.00px;height:19.16px;background:#d3e6ee;"></div>
<div class="r" style="left:335.20px;top:405.10px;width:1.00px;height:19.16px;background:#d3e6ee;"></div>
<div class="r" style="left:393.10px;top:405.10px;width:1.00px;height:19.16px;background:#d3e6ee;"></div>
<div class="r" style="left:483.80px;top:405.10px;width:1.00px;height:19.16px;background:#d3e6ee;"></div>
<div class="r" style="left:583.50px;top:405.10px;width:1.00px;height:19.16px;background:#d3e6ee;"></div>
<div class="r" style="left:653.20px;top:405.10px;width:1.00px;height:19.16px;background:#d3e6ee;"></div>
<div class="r" style="left:1002.10px;top:405.10px;width:1.00px;height:19.16px;background:#d3e6ee;"></div>
<div class="r" style="left:1082.90px;top:405.10px;width:1.00px;height:19.16px;background:#d3e6ee;"></div>
<div class="r" style="left:1138.90px;top:405.10px;width:1.00px;height:19.16px;background:#d3e6ee;"></div>
<div class="r" style="left:1208.90px;top:405.10px;width:1.00px;height:19.16px;background:#d3e6ee;"></div>
<div class="r" style="left:1556.80px;top:405.10px;width:1.00px;height:19.16px;background:#d3e6ee;"></div>
<div class="t" style="left:24.80px;top:410.00px;font-size:10px;line-height:10px;color:#111;font-weight:normal;font-style:normal;transform:scaleX(0.8764);transform-origin:0 0;">25-00000108</div>
<div class="t" style="left:124.00px;top:410.00px;font-size:10px;line-height:10px;color:#111;font-weight:normal;font-style:normal;transform:scaleX(0.9281);transform-origin:0 0;">6/14/2025</div>
<div class="t" style="left:267.93px;top:410.00px;font-size:10px;line-height:10px;color:#111;font-weight:normal;font-style:normal;transform:scaleX(0.8750);transform-origin:0 0;">0</div>
<div class="t" style="left:308.76px;top:410.00px;font-size:10px;line-height:10px;color:#111;font-weight:normal;font-style:normal;transform:scaleX(0.8889);transform-origin:0 0;">88.89</div>
<div class="t" style="left:1213.00px;top:411.00px;font-size:9.3px;line-height:9.3px;color:#111;font-weight:normal;font-style:normal;transform:scaleX(0.8729);transform-origin:0 0;">MMGHAHSC LN TWO MMGHAHSC FN TWO MMGHAHSC MN TWO</div>
<div class="t" style="left:1561.00px;top:410.00px;font-size:10px;line-height:10px;color:#111;font-weight:normal;font-style:normal;transform:scaleX(0.9357);transform-origin:0 0;">1/5/1974</div>
<div class="r" style="left:21.00px;top:424.26px;width:1544.00px;height:19.16px;background:#fde4e1;"></div>
<div class="r" style="left:21.00px;top:442.43px;width:1544.00px;height:1.00px;background:#ece4e3;"></div>
<div class="r" style="left:119.90px;top:424.26px;width:1.00px;height:19.16px;background:#eddcdc;"></div>
<div class="r" style="left:205.10px;top:424.26px;width:1.00px;height:19.16px;background:#eddcdc;"></div>
<div class="r" style="left:276.50px;top:424.26px;width:1.00px;height:19.16px;background:#eddcdc;"></div>
<div class="r" style="left:335.20px;top:424.26px;width:1.00px;height:19.16px;background:#eddcdc;"></div>
<div class="r" style="left:393.10px;top:424.26px;width:1.00px;height:19.16px;background:#eddcdc;"></div>
<div class="r" style="left:483.80px;top:424.26px;width:1.00px;height:19.16px;background:#eddcdc;"></div>
<div class="r" style="left:583.50px;top:424.26px;width:1.00px;height:19.16px;background:#eddcdc;"></div>
<div class="r" style="left:653.20px;top:424.26px;width:1.00px;height:19.16px;background:#eddcdc;"></div>
<div class="r" style="left:1002.10px;top:424.26px;width:1.00px;height:19.16px;background:#eddcdc;"></div>
<div class="r" style="left:1082.90px;top:424.26px;width:1.00px;height:19.16px;background:#eddcdc;"></div>
<div class="r" style="left:1138.90px;top:424.26px;width:1.00px;height:19.16px;background:#eddcdc;"></div>
<div class="r" style="left:1208.90px;top:424.26px;width:1.00px;height:19.16px;background:#eddcdc;"></div>
<div class="r" style="left:1556.80px;top:424.26px;width:1.00px;height:19.16px;background:#eddcdc;"></div>
<div class="t" style="left:24.80px;top:429.00px;font-size:10px;line-height:10px;color:#111;font-weight:normal;font-style:normal;transform:scaleX(0.8764);transform-origin:0 0;">25-00001886</div>
<div class="t" style="left:124.00px;top:429.00px;font-size:10px;line-height:10px;color:#111;font-weight:normal;font-style:normal;transform:scaleX(0.9281);transform-origin:0 0;">10/7/2025</div>
<div class="t" style="left:267.93px;top:429.00px;font-size:10px;line-height:10px;color:#111;font-weight:normal;font-style:normal;transform:scaleX(0.8750);transform-origin:0 0;">0</div>
<div class="t" style="left:308.76px;top:429.00px;font-size:10px;line-height:10px;color:#111;font-weight:normal;font-style:normal;transform:scaleX(0.8889);transform-origin:0 0;">66.67</div>
<div class="t" style="left:1213.00px;top:430.00px;font-size:9.3px;line-height:9.3px;color:#111;font-weight:normal;font-style:normal;transform:scaleX(0.8730);transform-origin:0 0;">MMGHAHSC LN ONE MMGHAHSC FN ONE MMGHAHSC MN ONE</div>
<div class="t" style="left:1561.00px;top:429.00px;font-size:10px;line-height:10px;color:#111;font-weight:normal;font-style:normal;transform:scaleX(0.9357);transform-origin:0 0;">8/4/1974</div>
<div class="r" style="left:21.00px;top:443.43px;width:1544.00px;height:19.16px;background:#acd7e6;"></div>
<div class="r" style="left:21.00px;top:461.60px;width:1544.00px;height:1.00px;background:#d7e7ee;"></div>
<div class="r" style="left:119.90px;top:443.43px;width:1.00px;height:19.16px;background:#d3e6ee;"></div>
<div class="r" style="left:205.10px;top:443.43px;width:1.00px;height:19.16px;background:#d3e6ee;"></div>
<div class="r" style="left:276.50px;top:443.43px;width:1.00px;height:19.16px;background:#d3e6ee;"></div>
<div class="r" style="left:335.20px;top:443.43px;width:1.00px;height:19.16px;background:#d3e6ee;"></div>
<div class="r" style="left:393.10px;top:443.43px;width:1.00px;height:19.16px;background:#d3e6ee;"></div>
<div class="r" style="left:483.80px;top:443.43px;width:1.00px;height:19.16px;background:#d3e6ee;"></div>
<div class="r" style="left:583.50px;top:443.43px;width:1.00px;height:19.16px;background:#d3e6ee;"></div>
<div class="r" style="left:653.20px;top:443.43px;width:1.00px;height:19.16px;background:#d3e6ee;"></div>
<div class="r" style="left:1002.10px;top:443.43px;width:1.00px;height:19.16px;background:#d3e6ee;"></div>
<div class="r" style="left:1082.90px;top:443.43px;width:1.00px;height:19.16px;background:#d3e6ee;"></div>
<div class="r" style="left:1138.90px;top:443.43px;width:1.00px;height:19.16px;background:#d3e6ee;"></div>
<div class="r" style="left:1208.90px;top:443.43px;width:1.00px;height:19.16px;background:#d3e6ee;"></div>
<div class="r" style="left:1556.80px;top:443.43px;width:1.00px;height:19.16px;background:#d3e6ee;"></div>
<div class="t" style="left:24.80px;top:448.00px;font-size:10px;line-height:10px;color:#111;font-weight:normal;font-style:normal;transform:scaleX(0.8764);transform-origin:0 0;">25-00000246</div>
<div class="t" style="left:124.00px;top:448.00px;font-size:10px;line-height:10px;color:#111;font-weight:normal;font-style:normal;transform:scaleX(0.9281);transform-origin:0 0;">9/13/2025</div>
<div class="t" style="left:267.93px;top:448.00px;font-size:10px;line-height:10px;color:#111;font-weight:normal;font-style:normal;transform:scaleX(0.8750);transform-origin:0 0;">0</div>
<div class="t" style="left:308.76px;top:448.00px;font-size:10px;line-height:10px;color:#111;font-weight:normal;font-style:normal;transform:scaleX(0.8889);transform-origin:0 0;">44.44</div>
<div class="t" style="left:1213.00px;top:449.00px;font-size:9.3px;line-height:9.3px;color:#111;font-weight:normal;font-style:normal;transform:scaleX(0.8730);transform-origin:0 0;">MMGHAHSC LN ONE MMGHAHSC FN ONE MMGHAHSC MN ONE</div>
<div class="t" style="left:1561.00px;top:448.00px;font-size:10px;line-height:10px;color:#111;font-weight:normal;font-style:normal;transform:scaleX(0.9357);transform-origin:0 0;">1/5/1974</div>
<div class="r" style="left:21.00px;top:462.60px;width:1544.00px;height:19.16px;background:#acd7e6;"></div>
<div class="r" style="left:21.00px;top:480.76px;width:1544.00px;height:1.00px;background:#d7e7ee;"></div>
<div class="r" style="left:119.90px;top:462.60px;width:1.00px;height:19.16px;background:#d3e6ee;"></div>
<div class="r" style="left:205.10px;top:462.60px;width:1.00px;height:19.16px;background:#d3e6ee;"></div>
<div class="r" style="left:276.50px;top:462.60px;width:1.00px;height:19.16px;background:#d3e6ee;"></div>
<div class="r" style="left:335.20px;top:462.60px;width:1.00px;height:19.16px;background:#d3e6ee;"></div>
<div class="r" style="left:393.10px;top:462.60px;width:1.00px;height:19.16px;background:#d3e6ee;"></div>
<div class="r" style="left:483.80px;top:462.60px;width:1.00px;height:19.16px;background:#d3e6ee;"></div>
<div class="r" style="left:583.50px;top:462.60px;width:1.00px;height:19.16px;background:#d3e6ee;"></div>
<div class="r" style="left:653.20px;top:462.60px;width:1.00px;height:19.16px;background:#d3e6ee;"></div>
<div class="r" style="left:1002.10px;top:462.60px;width:1.00px;height:19.16px;background:#d3e6ee;"></div>
<div class="r" style="left:1082.90px;top:462.60px;width:1.00px;height:19.16px;background:#d3e6ee;"></div>
<div class="r" style="left:1138.90px;top:462.60px;width:1.00px;height:19.16px;background:#d3e6ee;"></div>
<div class="r" style="left:1208.90px;top:462.60px;width:1.00px;height:19.16px;background:#d3e6ee;"></div>
<div class="r" style="left:1556.80px;top:462.60px;width:1.00px;height:19.16px;background:#d3e6ee;"></div>
<div class="t" style="left:24.80px;top:468.00px;font-size:10px;line-height:10px;color:#111;font-weight:normal;font-style:normal;transform:scaleX(0.8589);transform-origin:0 0;">OPD-22-00004713</div>
<div class="t" style="left:124.00px;top:468.00px;font-size:10px;line-height:10px;color:#111;font-weight:normal;font-style:normal;transform:scaleX(0.9281);transform-origin:0 0;">8/16/2025</div>
<div class="t" style="left:267.93px;top:468.00px;font-size:10px;line-height:10px;color:#111;font-weight:normal;font-style:normal;transform:scaleX(0.8750);transform-origin:0 0;">0</div>
<div class="t" style="left:308.76px;top:468.00px;font-size:10px;line-height:10px;color:#111;font-weight:normal;font-style:normal;transform:scaleX(0.8889);transform-origin:0 0;">88.89</div>
<div class="t" style="left:1213.00px;top:469.00px;font-size:9.3px;line-height:9.3px;color:#111;font-weight:normal;font-style:normal;transform:scaleX(0.8719);transform-origin:0 0;">MMGHAHSC LN ELEVEN MMGHAHSC FN ELEVEN MMGHAHSC MN ELEVEN</div>
<div class="t" style="left:1561.00px;top:468.00px;font-size:10px;line-height:10px;color:#111;font-weight:normal;font-style:normal;transform:scaleX(0.9357);transform-origin:0 0;">1/5/1974</div>
<div class="r" style="left:21.00px;top:481.76px;width:1544.00px;height:19.16px;background:#acd7e6;"></div>
<div class="r" style="left:21.00px;top:499.92px;width:1544.00px;height:1.00px;background:#d7e7ee;"></div>
<div class="r" style="left:119.90px;top:481.76px;width:1.00px;height:19.16px;background:#d3e6ee;"></div>
<div class="r" style="left:205.10px;top:481.76px;width:1.00px;height:19.16px;background:#d3e6ee;"></div>
<div class="r" style="left:276.50px;top:481.76px;width:1.00px;height:19.16px;background:#d3e6ee;"></div>
<div class="r" style="left:335.20px;top:481.76px;width:1.00px;height:19.16px;background:#d3e6ee;"></div>
<div class="r" style="left:393.10px;top:481.76px;width:1.00px;height:19.16px;background:#d3e6ee;"></div>
<div class="r" style="left:483.80px;top:481.76px;width:1.00px;height:19.16px;background:#d3e6ee;"></div>
<div class="r" style="left:583.50px;top:481.76px;width:1.00px;height:19.16px;background:#d3e6ee;"></div>
<div class="r" style="left:653.20px;top:481.76px;width:1.00px;height:19.16px;background:#d3e6ee;"></div>
<div class="r" style="left:1002.10px;top:481.76px;width:1.00px;height:19.16px;background:#d3e6ee;"></div>
<div class="r" style="left:1082.90px;top:481.76px;width:1.00px;height:19.16px;background:#d3e6ee;"></div>
<div class="r" style="left:1138.90px;top:481.76px;width:1.00px;height:19.16px;background:#d3e6ee;"></div>
<div class="r" style="left:1208.90px;top:481.76px;width:1.00px;height:19.16px;background:#d3e6ee;"></div>
<div class="r" style="left:1556.80px;top:481.76px;width:1.00px;height:19.16px;background:#d3e6ee;"></div>
<div class="t" style="left:24.80px;top:487.00px;font-size:10px;line-height:10px;color:#111;font-weight:normal;font-style:normal;transform:scaleX(0.8764);transform-origin:0 0;">24-00001866</div>
<div class="t" style="left:124.00px;top:487.00px;font-size:10px;line-height:10px;color:#111;font-weight:normal;font-style:normal;transform:scaleX(0.9281);transform-origin:0 0;">8/12/2025</div>
<div class="t" style="left:267.93px;top:487.00px;font-size:10px;line-height:10px;color:#111;font-weight:normal;font-style:normal;transform:scaleX(0.8750);transform-origin:0 0;">0</div>
<div class="t" style="left:316.40px;top:487.00px;font-size:10px;line-height:10px;color:#111;font-weight:normal;font-style:normal;transform:scaleX(0.8750);transform-origin:0 0;">100</div>
<div class="t" style="left:1213.00px;top:488.00px;font-size:9.3px;line-height:9.3px;color:#111;font-weight:normal;font-style:normal;transform:scaleX(0.8722);transform-origin:0 0;">MMGHAHSC LN THREE MMGHAHSC FN THREE MMGHAHSC MN THREE</div>
<div class="t" style="left:1561.00px;top:487.00px;font-size:10px;line-height:10px;color:#111;font-weight:normal;font-style:normal;transform:scaleX(0.9357);transform-origin:0 0;">1/5/1974</div>
<div class="r" style="left:21.00px;top:500.92px;width:1544.00px;height:19.16px;background:#acd7e6;"></div>
<div class="r" style="left:21.00px;top:519.09px;width:1544.00px;height:1.00px;background:#d7e7ee;"></div>
<div class="r" style="left:119.90px;top:500.92px;width:1.00px;height:19.16px;background:#d3e6ee;"></div>
<div class="r" style="left:205.10px;top:500.92px;width:1.00px;height:19.16px;background:#d3e6ee;"></div>
<div class="r" style="left:276.50px;top:500.92px;width:1.00px;height:19.16px;background:#d3e6ee;"></div>
<div class="r" style="left:335.20px;top:500.92px;width:1.00px;height:19.16px;background:#d3e6ee;"></div>
<div class="r" style="left:393.10px;top:500.92px;width:1.00px;height:19.16px;background:#d3e6ee;"></div>
<div class="r" style="left:483.80px;top:500.92px;width:1.00px;height:19.16px;background:#d3e6ee;"></div>
<div class="r" style="left:583.50px;top:500.92px;width:1.00px;height:19.16px;background:#d3e6ee;"></div>
<div class="r" style="left:653.20px;top:500.92px;width:1.00px;height:19.16px;background:#d3e6ee;"></div>
<div class="r" style="left:1002.10px;top:500.92px;width:1.00px;height:19.16px;background:#d3e6ee;"></div>
<div class="r" style="left:1082.90px;top:500.92px;width:1.00px;height:19.16px;background:#d3e6ee;"></div>
<div class="r" style="left:1138.90px;top:500.92px;width:1.00px;height:19.16px;background:#d3e6ee;"></div>
<div class="r" style="left:1208.90px;top:500.92px;width:1.00px;height:19.16px;background:#d3e6ee;"></div>
<div class="r" style="left:1556.80px;top:500.92px;width:1.00px;height:19.16px;background:#d3e6ee;"></div>
<div class="t" style="left:24.80px;top:506.00px;font-size:10px;line-height:10px;color:#111;font-weight:normal;font-style:normal;transform:scaleX(0.8770);transform-origin:0 0;">05-16002</div>
<div class="t" style="left:124.00px;top:506.00px;font-size:10px;line-height:10px;color:#111;font-weight:normal;font-style:normal;transform:scaleX(0.9357);transform-origin:0 0;">6/6/2025</div>
<div class="t" style="left:267.93px;top:506.00px;font-size:10px;line-height:10px;color:#111;font-weight:normal;font-style:normal;transform:scaleX(0.8750);transform-origin:0 0;">0</div>
<div class="t" style="left:316.40px;top:506.00px;font-size:10px;line-height:10px;color:#111;font-weight:normal;font-style:normal;transform:scaleX(0.8750);transform-origin:0 0;">100</div>
<div class="t" style="left:1213.00px;top:507.00px;font-size:9.3px;line-height:9.3px;color:#111;font-weight:normal;font-style:normal;transform:scaleX(0.8729);transform-origin:0 0;">MMGHAHSC LN TWO MMGHAHSC FN TWO MMGHAHSC MN TWO</div>
<div class="t" style="left:1561.00px;top:506.00px;font-size:10px;line-height:10px;color:#111;font-weight:normal;font-style:normal;transform:scaleX(0.9357);transform-origin:0 0;">1/5/1974</div>
<div class="r" style="left:21.00px;top:520.09px;width:1544.00px;height:19.16px;background:#acd7e6;"></div>
<div class="r" style="left:21.00px;top:538.25px;width:1544.00px;height:1.00px;background:#d7e7ee;"></div>
<div class="r" style="left:119.90px;top:520.09px;width:1.00px;height:19.16px;background:#d3e6ee;"></div>
<div class="r" style="left:205.10px;top:520.09px;width:1.00px;height:19.16px;background:#d3e6ee;"></div>
<div class="r" style="left:276.50px;top:520.09px;width:1.00px;height:19.16px;background:#d3e6ee;"></div>
<div class="r" style="left:335.20px;top:520.09px;width:1.00px;height:19.16px;background:#d3e6ee;"></div>
<div class="r" style="left:393.10px;top:520.09px;width:1.00px;height:19.16px;background:#d3e6ee;"></div>
<div class="r" style="left:483.80px;top:520.09px;width:1.00px;height:19.16px;background:#d3e6ee;"></div>
<div class="r" style="left:583.50px;top:520.09px;width:1.00px;height:19.16px;background:#d3e6ee;"></div>
<div class="r" style="left:653.20px;top:520.09px;width:1.00px;height:19.16px;background:#d3e6ee;"></div>
<div class="r" style="left:1002.10px;top:520.09px;width:1.00px;height:19.16px;background:#d3e6ee;"></div>
<div class="r" style="left:1082.90px;top:520.09px;width:1.00px;height:19.16px;background:#d3e6ee;"></div>
<div class="r" style="left:1138.90px;top:520.09px;width:1.00px;height:19.16px;background:#d3e6ee;"></div>
<div class="r" style="left:1208.90px;top:520.09px;width:1.00px;height:19.16px;background:#d3e6ee;"></div>
<div class="r" style="left:1556.80px;top:520.09px;width:1.00px;height:19.16px;background:#d3e6ee;"></div>
<div class="t" style="left:24.80px;top:525.00px;font-size:10px;line-height:10px;color:#111;font-weight:normal;font-style:normal;transform:scaleX(0.8764);transform-origin:0 0;">06-13000001</div>
<div class="t" style="left:124.00px;top:525.00px;font-size:10px;line-height:10px;color:#111;font-weight:normal;font-style:normal;transform:scaleX(0.9357);transform-origin:0 0;">8/8/2025</div>
<div class="t" style="left:267.93px;top:525.00px;font-size:10px;line-height:10px;color:#111;font-weight:normal;font-style:normal;transform:scaleX(0.8750);transform-origin:0 0;">0</div>
<div class="t" style="left:316.40px;top:525.00px;font-size:10px;line-height:10px;color:#111;font-weight:normal;font-style:normal;transform:scaleX(0.8750);transform-origin:0 0;">100</div>
<div class="t" style="left:1213.00px;top:526.00px;font-size:9.3px;line-height:9.3px;color:#111;font-weight:normal;font-style:normal;transform:scaleX(0.8730);transform-origin:0 0;">MMGHAHSC LN ONE MMGHAHSC FN ONE MMGHAHSC MN ONE</div>
<div class="t" style="left:1561.00px;top:525.00px;font-size:10px;line-height:10px;color:#111;font-weight:normal;font-style:normal;transform:scaleX(0.9357);transform-origin:0 0;">1/5/1974</div>
<div class="r" style="left:21.00px;top:539.25px;width:1544.00px;height:19.16px;background:#acd7e6;"></div>
<div class="r" style="left:21.00px;top:557.42px;width:1544.00px;height:1.00px;background:#d7e7ee;"></div>
<div class="r" style="left:119.90px;top:539.25px;width:1.00px;height:19.16px;background:#d3e6ee;"></div>
<div class="r" style="left:205.10px;top:539.25px;width:1.00px;height:19.16px;background:#d3e6ee;"></div>
<div class="r" style="left:276.50px;top:539.25px;width:1.00px;height:19.16px;background:#d3e6ee;"></div>
<div class="r" style="left:335.20px;top:539.25px;width:1.00px;height:19.16px;background:#d3e6ee;"></div>
<div class="r" style="left:393.10px;top:539.25px;width:1.00px;height:19.16px;background:#d3e6ee;"></div>
<div class="r" style="left:483.80px;top:539.25px;width:1.00px;height:19.16px;background:#d3e6ee;"></div>
<div class="r" style="left:583.50px;top:539.25px;width:1.00px;height:19.16px;background:#d3e6ee;"></div>
<div class="r" style="left:653.20px;top:539.25px;width:1.00px;height:19.16px;background:#d3e6ee;"></div>
<div class="r" style="left:1002.10px;top:539.25px;width:1.00px;height:19.16px;background:#d3e6ee;"></div>
<div class="r" style="left:1082.90px;top:539.25px;width:1.00px;height:19.16px;background:#d3e6ee;"></div>
<div class="r" style="left:1138.90px;top:539.25px;width:1.00px;height:19.16px;background:#d3e6ee;"></div>
<div class="r" style="left:1208.90px;top:539.25px;width:1.00px;height:19.16px;background:#d3e6ee;"></div>
<div class="r" style="left:1556.80px;top:539.25px;width:1.00px;height:19.16px;background:#d3e6ee;"></div>
<div class="t" style="left:24.80px;top:544.00px;font-size:10px;line-height:10px;color:#111;font-weight:normal;font-style:normal;transform:scaleX(0.8764);transform-origin:0 0;">25-00001867</div>
<div class="t" style="left:124.00px;top:544.00px;font-size:10px;line-height:10px;color:#111;font-weight:normal;font-style:normal;transform:scaleX(0.9281);transform-origin:0 0;">8/12/2025</div>
<div class="t" style="left:267.93px;top:544.00px;font-size:10px;line-height:10px;color:#111;font-weight:normal;font-style:normal;transform:scaleX(0.8750);transform-origin:0 0;">0</div>
<div class="t" style="left:316.40px;top:544.00px;font-size:10px;line-height:10px;color:#111;font-weight:normal;font-style:normal;transform:scaleX(0.8750);transform-origin:0 0;">100</div>
<div class="t" style="left:1213.00px;top:545.00px;font-size:9.3px;line-height:9.3px;color:#111;font-weight:normal;font-style:normal;transform:scaleX(0.8729);transform-origin:0 0;">MMGHAHSC LN FIVE MMGHAHSC FN FIVE MMGHAHSC MN FIVE</div>
<div class="t" style="left:1561.00px;top:544.00px;font-size:10px;line-height:10px;color:#111;font-weight:normal;font-style:normal;transform:scaleX(0.9357);transform-origin:0 0;">1/5/1974</div>
<div class="r" style="left:21.00px;top:558.42px;width:1544.00px;height:19.16px;background:#acd7e6;"></div>
<div class="r" style="left:21.00px;top:576.59px;width:1544.00px;height:1.00px;background:#d7e7ee;"></div>
<div class="r" style="left:119.90px;top:558.42px;width:1.00px;height:19.16px;background:#d3e6ee;"></div>
<div class="r" style="left:205.10px;top:558.42px;width:1.00px;height:19.16px;background:#d3e6ee;"></div>
<div class="r" style="left:276.50px;top:558.42px;width:1.00px;height:19.16px;background:#d3e6ee;"></div>
<div class="r" style="left:335.20px;top:558.42px;width:1.00px;height:19.16px;background:#d3e6ee;"></div>
<div class="r" style="left:393.10px;top:558.42px;width:1.00px;height:19.16px;background:#d3e6ee;"></div>
<div class="r" style="left:483.80px;top:558.42px;width:1.00px;height:19.16px;background:#d3e6ee;"></div>
<div class="r" style="left:583.50px;top:558.42px;width:1.00px;height:19.16px;background:#d3e6ee;"></div>
<div class="r" style="left:653.20px;top:558.42px;width:1.00px;height:19.16px;background:#d3e6ee;"></div>
<div class="r" style="left:1002.10px;top:558.42px;width:1.00px;height:19.16px;background:#d3e6ee;"></div>
<div class="r" style="left:1082.90px;top:558.42px;width:1.00px;height:19.16px;background:#d3e6ee;"></div>
<div class="r" style="left:1138.90px;top:558.42px;width:1.00px;height:19.16px;background:#d3e6ee;"></div>
<div class="r" style="left:1208.90px;top:558.42px;width:1.00px;height:19.16px;background:#d3e6ee;"></div>
<div class="r" style="left:1556.80px;top:558.42px;width:1.00px;height:19.16px;background:#d3e6ee;"></div>
<div class="t" style="left:24.80px;top:564.00px;font-size:10px;line-height:10px;color:#111;font-weight:normal;font-style:normal;transform:scaleX(0.8764);transform-origin:0 0;">23-00001870</div>
<div class="t" style="left:124.00px;top:564.00px;font-size:10px;line-height:10px;color:#111;font-weight:normal;font-style:normal;transform:scaleX(0.9281);transform-origin:0 0;">8/12/2025</div>
<div class="t" style="left:267.93px;top:564.00px;font-size:10px;line-height:10px;color:#111;font-weight:normal;font-style:normal;transform:scaleX(0.8750);transform-origin:0 0;">0</div>
<div class="t" style="left:316.40px;top:564.00px;font-size:10px;line-height:10px;color:#111;font-weight:normal;font-style:normal;transform:scaleX(0.8750);transform-origin:0 0;">100</div>
<div class="t" style="left:1213.00px;top:565.00px;font-size:9.3px;line-height:9.3px;color:#111;font-weight:normal;font-style:normal;transform:scaleX(0.8734);transform-origin:0 0;">MMGHAHSC LN SIX MMGHAHSC FN SIX MMGHAHSC MN SIX</div>
<div class="t" style="left:1561.00px;top:564.00px;font-size:10px;line-height:10px;color:#111;font-weight:normal;font-style:normal;transform:scaleX(0.9357);transform-origin:0 0;">1/5/1974</div>
<div class="r" style="left:21.00px;top:577.59px;width:1544.00px;height:19.16px;background:#acd7e6;"></div>
<div class="r" style="left:21.00px;top:595.75px;width:1544.00px;height:1.00px;background:#d7e7ee;"></div>
<div class="r" style="left:119.90px;top:577.59px;width:1.00px;height:19.16px;background:#d3e6ee;"></div>
<div class="r" style="left:205.10px;top:577.59px;width:1.00px;height:19.16px;background:#d3e6ee;"></div>
<div class="r" style="left:276.50px;top:577.59px;width:1.00px;height:19.16px;background:#d3e6ee;"></div>
<div class="r" style="left:335.20px;top:577.59px;width:1.00px;height:19.16px;background:#d3e6ee;"></div>
<div class="r" style="left:393.10px;top:577.59px;width:1.00px;height:19.16px;background:#d3e6ee;"></div>
<div class="r" style="left:483.80px;top:577.59px;width:1.00px;height:19.16px;background:#d3e6ee;"></div>
<div class="r" style="left:583.50px;top:577.59px;width:1.00px;height:19.16px;background:#d3e6ee;"></div>
<div class="r" style="left:653.20px;top:577.59px;width:1.00px;height:19.16px;background:#d3e6ee;"></div>
<div class="r" style="left:1002.10px;top:577.59px;width:1.00px;height:19.16px;background:#d3e6ee;"></div>
<div class="r" style="left:1082.90px;top:577.59px;width:1.00px;height:19.16px;background:#d3e6ee;"></div>
<div class="r" style="left:1138.90px;top:577.59px;width:1.00px;height:19.16px;background:#d3e6ee;"></div>
<div class="r" style="left:1208.90px;top:577.59px;width:1.00px;height:19.16px;background:#d3e6ee;"></div>
<div class="r" style="left:1556.80px;top:577.59px;width:1.00px;height:19.16px;background:#d3e6ee;"></div>
<div class="t" style="left:24.80px;top:583.00px;font-size:10px;line-height:10px;color:#111;font-weight:normal;font-style:normal;transform:scaleX(0.8770);transform-origin:0 0;">06-11004</div>
<div class="t" style="left:124.00px;top:583.00px;font-size:10px;line-height:10px;color:#111;font-weight:normal;font-style:normal;transform:scaleX(0.9357);transform-origin:0 0;">8/8/2025</div>
<div class="t" style="left:267.93px;top:583.00px;font-size:10px;line-height:10px;color:#111;font-weight:normal;font-style:normal;transform:scaleX(0.8750);transform-origin:0 0;">0</div>
<div class="t" style="left:397.20px;top:583.00px;font-size:10px;line-height:10px;color:#111;font-weight:normal;font-style:normal;transform:scaleX(0.9357);transform-origin:0 0;">6/1/2025</div>
<div class="t" style="left:487.80px;top:583.00px;font-size:10px;line-height:10px;color:#111;font-weight:normal;font-style:normal;transform:scaleX(0.8783);transform-origin:0 0;">06-09-2025</div>
<div class="t" style="left:587.50px;top:583.00px;font-size:10px;line-height:10px;color:#111;font-weight:normal;font-style:normal;transform:scaleX(0.8750);transform-origin:0 0;">190270665598</div>
<div class="t" style="left:657.00px;top:584.00px;font-size:9.3px;line-height:9.3px;color:#111;font-weight:normal;font-style:normal;transform:scaleX(0.8730);transform-origin:0 0;">MMGHAHSC LN ONE MMGHAHSC FN ONE MMGHAHSC MN ONE</div>
<div class="t" style="left:1006.50px;top:583.00px;font-size:10px;line-height:10px;color:#111;font-weight:normal;font-style:normal;transform:scaleX(0.9357);transform-origin:0 0;">1/2/1974</div>
<div class="t" style="left:1086.60px;top:583.00px;font-size:10px;line-height:10px;color:#111;font-weight:normal;font-style:normal;transform:scaleX(0.8050);transform-origin:0 0;">M</div>
<div class="t" style="left:1143.00px;top:583.00px;font-size:10px;line-height:10px;color:#111;font-weight:normal;font-style:normal;transform:scaleX(0.8750);transform-origin:0 0;">190270665598</div>
<div class="t" style="left:1213.00px;top:584.00px;font-size:9.3px;line-height:9.3px;color:#111;font-weight:normal;font-style:normal;transform:scaleX(0.8730);transform-origin:0 0;">MMGHAHSC LN ONE MMGHAHSC FN ONE MMGHAHSC MN ONE</div>
<div class="t" style="left:1561.00px;top:583.00px;font-size:10px;line-height:10px;color:#111;font-weight:normal;font-style:normal;transform:scaleX(0.9357);transform-origin:0 0;">1/5/1974</div>
<div class="r" style="left:21.00px;top:596.75px;width:1544.00px;height:19.16px;background:#fde4e1;"></div>
<div class="r" style="left:21.00px;top:614.91px;width:1544.00px;height:1.00px;background:#ece4e3;"></div>
<div class="r" style="left:119.90px;top:596.75px;width:1.00px;height:19.16px;background:#eddcdc;"></div>
<div class="r" style="left:205.10px;top:596.75px;width:1.00px;height:19.16px;background:#eddcdc;"></div>
<div class="r" style="left:276.50px;top:596.75px;width:1.00px;height:19.16px;background:#eddcdc;"></div>
<div class="r" style="left:335.20px;top:596.75px;width:1.00px;height:19.16px;background:#eddcdc;"></div>
<div class="r" style="left:393.10px;top:596.75px;width:1.00px;height:19.16px;background:#eddcdc;"></div>
<div class="r" style="left:483.80px;top:596.75px;width:1.00px;height:19.16px;background:#eddcdc;"></div>
<div class="r" style="left:583.50px;top:596.75px;width:1.00px;height:19.16px;background:#eddcdc;"></div>
<div class="r" style="left:653.20px;top:596.75px;width:1.00px;height:19.16px;background:#eddcdc;"></div>
<div class="r" style="left:1002.10px;top:596.75px;width:1.00px;height:19.16px;background:#eddcdc;"></div>
<div class="r" style="left:1082.90px;top:596.75px;width:1.00px;height:19.16px;background:#eddcdc;"></div>
<div class="r" style="left:1138.90px;top:596.75px;width:1.00px;height:19.16px;background:#eddcdc;"></div>
<div class="r" style="left:1208.90px;top:596.75px;width:1.00px;height:19.16px;background:#eddcdc;"></div>
<div class="r" style="left:1556.80px;top:596.75px;width:1.00px;height:19.16px;background:#eddcdc;"></div>
<div class="t" style="left:24.80px;top:602.00px;font-size:10px;line-height:10px;color:#111;font-weight:normal;font-style:normal;transform:scaleX(0.8770);transform-origin:0 0;">06-11001</div>
<div class="t" style="left:124.00px;top:602.00px;font-size:10px;line-height:10px;color:#111;font-weight:normal;font-style:normal;transform:scaleX(0.9357);transform-origin:0 0;">8/8/2025</div>
<div class="t" style="left:267.93px;top:602.00px;font-size:10px;line-height:10px;color:#111;font-weight:normal;font-style:normal;transform:scaleX(0.8750);transform-origin:0 0;">0</div>
<div class="t" style="left:397.20px;top:602.00px;font-size:10px;line-height:10px;color:#111;font-weight:normal;font-style:normal;transform:scaleX(0.9357);transform-origin:0 0;">6/1/2025</div>
<div class="t" style="left:487.80px;top:602.00px;font-size:10px;line-height:10px;color:#111;font-weight:normal;font-style:normal;transform:scaleX(0.8783);transform-origin:0 0;">06-09-2025</div>
<div class="t" style="left:587.50px;top:602.00px;font-size:10px;line-height:10px;color:#111;font-weight:normal;font-style:normal;transform:scaleX(0.8750);transform-origin:0 0;">190270665598</div>
<div class="t" style="left:657.00px;top:603.00px;font-size:9.3px;line-height:9.3px;color:#111;font-weight:normal;font-style:normal;transform:scaleX(0.8730);transform-origin:0 0;">MMGHAHSC LN ONE MMGHAHSC FN ONE MMGHAHSC MN ONE</div>
<div class="t" style="left:1006.50px;top:602.00px;font-size:10px;line-height:10px;color:#111;font-weight:normal;font-style:normal;transform:scaleX(0.9357);transform-origin:0 0;">1/2/1974</div>
<div class="t" style="left:1086.60px;top:602.00px;font-size:10px;line-height:10px;color:#111;font-weight:normal;font-style:normal;transform:scaleX(0.8050);transform-origin:0 0;">M</div>
<div class="t" style="left:1143.00px;top:602.00px;font-size:10px;line-height:10px;color:#111;font-weight:normal;font-style:normal;transform:scaleX(0.8750);transform-origin:0 0;">190270665598</div>
<div class="t" style="left:1213.00px;top:603.00px;font-size:9.3px;line-height:9.3px;color:#111;font-weight:normal;font-style:normal;transform:scaleX(0.8730);transform-origin:0 0;">MMGHAHSC LN ONE MMGHAHSC FN ONE MMGHAHSC MN ONE</div>
<div class="t" style="left:1561.00px;top:602.00px;font-size:10px;line-height:10px;color:#111;font-weight:normal;font-style:normal;transform:scaleX(0.9357);transform-origin:0 0;">1/5/1974</div>
<div class="r" style="left:21.00px;top:615.91px;width:1544.00px;height:19.16px;background:#acd7e6;"></div>
<div class="r" style="left:21.00px;top:634.08px;width:1544.00px;height:1.00px;background:#d7e7ee;"></div>
<div class="r" style="left:119.90px;top:615.91px;width:1.00px;height:19.16px;background:#d3e6ee;"></div>
<div class="r" style="left:205.10px;top:615.91px;width:1.00px;height:19.16px;background:#d3e6ee;"></div>
<div class="r" style="left:276.50px;top:615.91px;width:1.00px;height:19.16px;background:#d3e6ee;"></div>
<div class="r" style="left:335.20px;top:615.91px;width:1.00px;height:19.16px;background:#d3e6ee;"></div>
<div class="r" style="left:393.10px;top:615.91px;width:1.00px;height:19.16px;background:#d3e6ee;"></div>
<div class="r" style="left:483.80px;top:615.91px;width:1.00px;height:19.16px;background:#d3e6ee;"></div>
<div class="r" style="left:583.50px;top:615.91px;width:1.00px;height:19.16px;background:#d3e6ee;"></div>
<div class="r" style="left:653.20px;top:615.91px;width:1.00px;height:19.16px;background:#d3e6ee;"></div>
<div class="r" style="left:1002.10px;top:615.91px;width:1.00px;height:19.16px;background:#d3e6ee;"></div>
<div class="r" style="left:1082.90px;top:615.91px;width:1.00px;height:19.16px;background:#d3e6ee;"></div>
<div class="r" style="left:1138.90px;top:615.91px;width:1.00px;height:19.16px;background:#d3e6ee;"></div>
<div class="r" style="left:1208.90px;top:615.91px;width:1.00px;height:19.16px;background:#d3e6ee;"></div>
<div class="r" style="left:1556.80px;top:615.91px;width:1.00px;height:19.16px;background:#d3e6ee;"></div>
<div class="t" style="left:24.80px;top:621.00px;font-size:10px;line-height:10px;color:#111;font-weight:normal;font-style:normal;transform:scaleX(0.8770);transform-origin:0 0;">05-16001</div>
<div class="t" style="left:124.00px;top:621.00px;font-size:10px;line-height:10px;color:#111;font-weight:normal;font-style:normal;transform:scaleX(0.9357);transform-origin:0 0;">7/5/2025</div>
<div class="t" style="left:267.93px;top:621.00px;font-size:10px;line-height:10px;color:#111;font-weight:normal;font-style:normal;transform:scaleX(0.8750);transform-origin:0 0;">0</div>
<div class="t" style="left:316.40px;top:621.00px;font-size:10px;line-height:10px;color:#111;font-weight:normal;font-style:normal;transform:scaleX(0.8750);transform-origin:0 0;">100</div>
<div class="t" style="left:384.63px;top:621.00px;font-size:10px;line-height:10px;color:#111;font-weight:normal;font-style:normal;transform:scaleX(0.8750);transform-origin:0 0;">0</div>
<div class="t" style="left:397.20px;top:621.00px;font-size:10px;line-height:10px;color:#111;font-weight:normal;font-style:normal;transform:scaleX(0.9357);transform-origin:0 0;">5/1/2025</div>
<div class="t" style="left:487.80px;top:621.00px;font-size:10px;line-height:10px;color:#111;font-weight:normal;font-style:normal;transform:scaleX(0.8783);transform-origin:0 0;">05-06-2025</div>
<div class="t" style="left:587.50px;top:621.00px;font-size:10px;line-height:10px;color:#111;font-weight:normal;font-style:normal;transform:scaleX(0.8750);transform-origin:0 0;">190270665598</div>
<div class="t" style="left:657.00px;top:622.00px;font-size:9.3px;line-height:9.3px;color:#111;font-weight:normal;font-style:normal;transform:scaleX(0.8730);transform-origin:0 0;">MMGHAHSC LN ONE MMGHAHSC FN ONE MMGHAHSC MN ONE</div>
<div class="t" style="left:1006.50px;top:621.00px;font-size:10px;line-height:10px;color:#111;font-weight:normal;font-style:normal;transform:scaleX(0.9357);transform-origin:0 0;">1/2/1974</div>
<div class="t" style="left:1086.60px;top:621.00px;font-size:10px;line-height:10px;color:#111;font-weight:normal;font-style:normal;transform:scaleX(0.8050);transform-origin:0 0;">M</div>
<div class="t" style="left:1143.00px;top:621.00px;font-size:10px;line-height:10px;color:#111;font-weight:normal;font-style:normal;transform:scaleX(0.8750);transform-origin:0 0;">190270665598</div>
<div class="t" style="left:1213.00px;top:622.00px;font-size:9.3px;line-height:9.3px;color:#111;font-weight:normal;font-style:normal;transform:scaleX(0.8730);transform-origin:0 0;">MMGHAHSC LN ONE MMGHAHSC FN ONE MMGHAHSC MN ONE</div>
<div class="t" style="left:1561.00px;top:621.00px;font-size:10px;line-height:10px;color:#111;font-weight:normal;font-style:normal;transform:scaleX(0.9357);transform-origin:0 0;">1/5/1974</div>
<div class="r" style="left:21.00px;top:635.08px;width:1544.00px;height:19.16px;background:#acd7e6;"></div>
<div class="r" style="left:21.00px;top:653.24px;width:1544.00px;height:1.00px;background:#d7e7ee;"></div>
<div class="r" style="left:119.90px;top:635.08px;width:1.00px;height:19.16px;background:#d3e6ee;"></div>
<div class="r" style="left:205.10px;top:635.08px;width:1.00px;height:19.16px;background:#d3e6ee;"></div>
<div class="r" style="left:276.50px;top:635.08px;width:1.00px;height:19.16px;background:#d3e6ee;"></div>
<div class="r" style="left:335.20px;top:635.08px;width:1.00px;height:19.16px;background:#d3e6ee;"></div>
<div class="r" style="left:393.10px;top:635.08px;width:1.00px;height:19.16px;background:#d3e6ee;"></div>
<div class="r" style="left:483.80px;top:635.08px;width:1.00px;height:19.16px;background:#d3e6ee;"></div>
<div class="r" style="left:583.50px;top:635.08px;width:1.00px;height:19.16px;background:#d3e6ee;"></div>
<div class="r" style="left:653.20px;top:635.08px;width:1.00px;height:19.16px;background:#d3e6ee;"></div>
<div class="r" style="left:1002.10px;top:635.08px;width:1.00px;height:19.16px;background:#d3e6ee;"></div>
<div class="r" style="left:1082.90px;top:635.08px;width:1.00px;height:19.16px;background:#d3e6ee;"></div>
<div class="r" style="left:1138.90px;top:635.08px;width:1.00px;height:19.16px;background:#d3e6ee;"></div>
<div class="r" style="left:1208.90px;top:635.08px;width:1.00px;height:19.16px;background:#d3e6ee;"></div>
<div class="r" style="left:1556.80px;top:635.08px;width:1.00px;height:19.16px;background:#d3e6ee;"></div>
<div class="t" style="left:24.80px;top:640.00px;font-size:10px;line-height:10px;color:#111;font-weight:normal;font-style:normal;transform:scaleX(0.8770);transform-origin:0 0;">05-13002</div>
<div class="t" style="left:124.00px;top:640.00px;font-size:10px;line-height:10px;color:#111;font-weight:normal;font-style:normal;transform:scaleX(0.9357);transform-origin:0 0;">7/5/2025</div>
<div class="t" style="left:267.93px;top:640.00px;font-size:10px;line-height:10px;color:#111;font-weight:normal;font-style:normal;transform:scaleX(0.8750);transform-origin:0 0;">0</div>
<div class="t" style="left:316.40px;top:640.00px;font-size:10px;line-height:10px;color:#111;font-weight:normal;font-style:normal;transform:scaleX(0.8750);transform-origin:0 0;">100</div>
<div class="t" style="left:384.63px;top:640.00px;font-size:10px;line-height:10px;color:#111;font-weight:normal;font-style:normal;transform:scaleX(0.8750);transform-origin:0 0;">0</div>
<div class="t" style="left:397.20px;top:640.00px;font-size:10px;line-height:10px;color:#111;font-weight:normal;font-style:normal;transform:scaleX(0.9357);transform-origin:0 0;">5/1/2025</div>
<div class="t" style="left:487.80px;top:640.00px;font-size:10px;line-height:10px;color:#111;font-weight:normal;font-style:normal;transform:scaleX(0.8783);transform-origin:0 0;">05-06-2025</div>
<div class="t" style="left:587.50px;top:640.00px;font-size:10px;line-height:10px;color:#111;font-weight:normal;font-style:normal;transform:scaleX(0.8750);transform-origin:0 0;">190270665601</div>
<div class="t" style="left:657.00px;top:641.00px;font-size:9.3px;line-height:9.3px;color:#111;font-weight:normal;font-style:normal;transform:scaleX(0.8729);transform-origin:0 0;">MMGHAHSC LN TWO MMGHAHSC FN TWO MMGHAHSC MN TWO</div>
<div class="t" style="left:1006.50px;top:640.00px;font-size:10px;line-height:10px;color:#111;font-weight:normal;font-style:normal;transform:scaleX(0.9357);transform-origin:0 0;">1/3/1974</div>
<div class="t" style="left:1086.60px;top:640.00px;font-size:10px;line-height:10px;color:#111;font-weight:normal;font-style:normal;transform:scaleX(0.8050);transform-origin:0 0;">F</div>
<div class="t" style="left:1143.00px;top:640.00px;font-size:10px;line-height:10px;color:#111;font-weight:normal;font-style:normal;transform:scaleX(0.8750);transform-origin:0 0;">190270665601</div>
<div class="t" style="left:1213.00px;top:641.00px;font-size:9.3px;line-height:9.3px;color:#111;font-weight:normal;font-style:normal;transform:scaleX(0.8729);transform-origin:0 0;">MMGHAHSC LN TWO MMGHAHSC FN TWO MMGHAHSC MN TWO</div>
<div class="t" style="left:1561.00px;top:640.00px;font-size:10px;line-height:10px;color:#111;font-weight:normal;font-style:normal;transform:scaleX(0.9357);transform-origin:0 0;">1/5/1974</div>
<div class="r" style="left:21.00px;top:654.24px;width:1544.00px;height:19.16px;background:#acd7e6;"></div>
<div class="r" style="left:21.00px;top:672.41px;width:1544.00px;height:1.00px;background:#d7e7ee;"></div>
<div class="r" style="left:119.90px;top:654.24px;width:1.00px;height:19.16px;background:#d3e6ee;"></div>
<div class="r" style="left:205.10px;top:654.24px;width:1.00px;height:19.16px;background:#d3e6ee;"></div>
<div class="r" style="left:276.50px;top:654.24px;width:1.00px;height:19.16px;background:#d3e6ee;"></div>
<div class="r" style="left:335.20px;top:654.24px;width:1.00px;height:19.16px;background:#d3e6ee;"></div>
<div class="r" style="left:393.10px;top:654.24px;width:1.00px;height:19.16px;background:#d3e6ee;"></div>
<div class="r" style="left:483.80px;top:654.24px;width:1.00px;height:19.16px;background:#d3e6ee;"></div>
<div class="r" style="left:583.50px;top:654.24px;width:1.00px;height:19.16px;background:#d3e6ee;"></div>
<div class="r" style="left:653.20px;top:654.24px;width:1.00px;height:19.16px;background:#d3e6ee;"></div>
<div class="r" style="left:1002.10px;top:654.24px;width:1.00px;height:19.16px;background:#d3e6ee;"></div>
<div class="r" style="left:1082.90px;top:654.24px;width:1.00px;height:19.16px;background:#d3e6ee;"></div>
<div class="r" style="left:1138.90px;top:654.24px;width:1.00px;height:19.16px;background:#d3e6ee;"></div>
<div class="r" style="left:1208.90px;top:654.24px;width:1.00px;height:19.16px;background:#d3e6ee;"></div>
<div class="r" style="left:1556.80px;top:654.24px;width:1.00px;height:19.16px;background:#d3e6ee;"></div>
<div class="t" style="left:24.80px;top:659.00px;font-size:10px;line-height:10px;color:#111;font-weight:normal;font-style:normal;transform:scaleX(0.8770);transform-origin:0 0;">05-02020</div>
<div class="t" style="left:124.00px;top:659.00px;font-size:10px;line-height:10px;color:#111;font-weight:normal;font-style:normal;transform:scaleX(0.9281);transform-origin:0 0;">6/29/2025</div>
<div class="t" style="left:267.93px;top:659.00px;font-size:10px;line-height:10px;color:#111;font-weight:normal;font-style:normal;transform:scaleX(0.8750);transform-origin:0 0;">0</div>
<div class="t" style="left:316.40px;top:659.00px;font-size:10px;line-height:10px;color:#111;font-weight:normal;font-style:normal;transform:scaleX(0.8750);transform-origin:0 0;">100</div>
<div class="t" style="left:367.26px;top:659.00px;font-size:10px;line-height:10px;color:#111;font-weight:normal;font-style:normal;transform:scaleX(0.8889);transform-origin:0 0;">66.67</div>
<div class="t" style="left:397.20px;top:659.00px;font-size:10px;line-height:10px;color:#111;font-weight:normal;font-style:normal;transform:scaleX(0.9357);transform-origin:0 0;">4/1/2025</div>
<div class="t" style="left:487.80px;top:659.00px;font-size:10px;line-height:10px;color:#111;font-weight:normal;font-style:normal;transform:scaleX(0.8783);transform-origin:0 0;">04-30-2025</div>
<div class="t" style="left:587.50px;top:659.00px;font-size:10px;line-height:10px;color:#111;font-weight:normal;font-style:normal;transform:scaleX(0.8750);transform-origin:0 0;">190270665806</div>
<div class="t" style="left:657.00px;top:660.00px;font-size:9.3px;line-height:9.3px;color:#111;font-weight:normal;font-style:normal;transform:scaleX(0.8717);transform-origin:0 0;">MMGHAHSC LN TWENTY MMGHAHSC FN TWENTY MMGHAHSC MN TWENTY</div>
<div class="t" style="left:1006.50px;top:659.00px;font-size:10px;line-height:10px;color:#111;font-weight:normal;font-style:normal;transform:scaleX(0.9281);transform-origin:0 0;">1/21/1974</div>
<div class="t" style="left:1086.60px;top:659.00px;font-size:10px;line-height:10px;color:#111;font-weight:normal;font-style:normal;transform:scaleX(0.8050);transform-origin:0 0;">F</div>
<div class="t" style="left:1143.00px;top:659.00px;font-size:10px;line-height:10px;color:#111;font-weight:normal;font-style:normal;transform:scaleX(0.8750);transform-origin:0 0;">190270665806</div>
<div class="t" style="left:1213.00px;top:660.00px;font-size:9.3px;line-height:9.3px;color:#111;font-weight:normal;font-style:normal;transform:scaleX(0.8717);transform-origin:0 0;">MMGHAHSC LN TWENTY MMGHAHSC FN TWENTY MMGHAHSC MN TWENTY</div>
<div class="t" style="left:1561.00px;top:659.00px;font-size:10px;line-height:10px;color:#111;font-weight:normal;font-style:normal;transform:scaleX(0.9357);transform-origin:0 0;">1/5/1974</div>
<svg class="r" style="left:8px;top:26px;" width="7" height="10" viewBox="0 0 7 10"><path d="M0.8 0.8 L6 5 L0.8 9.2 Z" fill="none" stroke="#777" stroke-width="1"/></svg>
</div>
<div class="r" style="left:1568px;top:186.5px;width:22px;height:20.5px;overflow:hidden;background:#f8f8f8;border-left:1px solid #e8e8e8;border-bottom:1px solid #e6e6e6">
<div class="t" style="left:4.80px;top:6.00px;font-size:10px;line-height:10px;color:#333;font-weight:normal;font-style:normal;transform:scaleX(0.9039);transform-origin:0 0;">m Birthdate</div>
</div>
<div class="r" style="left:1576.00px;top:207.00px;width:14.00px;height:644.00px;background:#f5f5f5;"></div>
<div class="r" style="left:1582.00px;top:222.00px;width:2.20px;height:389.00px;background:#8b8b8b;border-radius:1px;"></div>
<div class="r" style="left:25.00px;top:856.30px;width:680.00px;height:2.90px;background:#8b8b8b;border-radius:1.5px;"></div>
<div class="r" style="left:0.00px;top:869.50px;width:1600.00px;height:1.00px;background:#fdfdfd;"></div>
<div class="r" style="left:274.50px;top:871.00px;width:1.00px;height:29.00px;background:#e8e8e8;"></div>
<svg class="r" style="left:22px;top:877px;" width="18" height="18" viewBox="0 0 18 18"><path d="M8 1.7 A7.4 7.4 0 1 0 15.8 13.7" fill="none" stroke="#4f7fd2" stroke-width="1.5"/></svg>
<div class="t" style="left:48.50px;top:881.00px;font-size:11px;line-height:11px;color:#1e1e1e;font-weight:normal;font-style:normal;transform:scaleX(0.9650);transform-origin:0 0;">Editing Claim No. 25-00001876-sample CF2. . .</div>
<div class="r" style="left:374px;top:130px;width:852.5px;height:639.5px;background:#fff;border:1px solid #bdbdbd;border-radius:7px;box-shadow:0 4px 20px rgba(0,0,0,.28),0 0 3px rgba(0,0,0,.18);overflow:hidden">
<div class="r" style="left:-1.00px;top:-1.00px;width:852.50px;height:24.00px;background:#f2f2f2;"></div>
<div class="r" style="left:-1.00px;top:23.00px;width:159.50px;height:615.50px;background:#eef5fc;"></div>
<div class="r" style="left:-1.00px;top:23.00px;width:159.50px;height:31.50px;background:#f5f9fd;"></div>
<div class="r" style="left:158.50px;top:23.00px;width:1.00px;height:615.50px;background:#dfe3e8;"></div>
</div>
<svg class="r" style="left:376px;top:134px" width="24" height="18" viewBox="376 134 24 18"><path d="M385 146.8 L389 138.5" stroke="#e6e060" stroke-width="1.2"/><path d="M387 146.8 L391 138.5" stroke="#5cae5c" stroke-width="1.2"/><ellipse cx="384.4" cy="142.5" rx="4.9" ry="2.3" transform="rotate(-62 384.4 142.5)" fill="none" stroke="#e06060" stroke-width="1.2"/><ellipse cx="391.3" cy="142.5" rx="4.9" ry="2.3" transform="rotate(-62 391.3 142.5)" fill="none" stroke="#6a84c4" stroke-width="1.2"/></svg>
<div class="t" style="left:402.00px;top:138.00px;font-size:10px;line-height:10px;color:#262626;font-weight:normal;font-style:normal;transform:scaleX(0.8395);transform-origin:0 0;">CLAIM FORM 2</div>
<svg class="r" style="left:1130px;top:132px" width="22" height="20" viewBox="1130 132 22 20"><rect x="1135.8" y="136.4" width="10.6" height="10.2" rx="1.2" fill="#fff" stroke="#7d8cc4" stroke-width="1.1"/><path d="M1139 140.5 V146" stroke="#4a5582" stroke-width="1.2" stroke-dasharray="1 .6"/><rect x="1141.5" y="140" width="2" height="2.5" fill="#c8d0ea"/><circle cx="1144.3" cy="144.6" r="3.6" fill="#5b6598" stroke="#fff" stroke-width=".6" stroke-dasharray="1.2 1"/><circle cx="1144.3" cy="144.6" r="1.3" fill="#dfe4f2"/></svg>
<div class="r" style="left:1170.80px;top:142.80px;width:8.40px;height:1.20px;background:#333;"></div>
<svg class="r" style="left:1205px;top:138px;" width="10" height="10" viewBox="0 0 10 10"><path d="M1 1 L9 9 M9 1 L1 9" stroke="#333" stroke-width="1.1"/></svg>
<div class="r" style="left:385.00px;top:164.10px;width:14.00px;height:1.40px;background:#585858;"></div>
<div class="r" style="left:385.00px;top:168.80px;width:14.00px;height:1.40px;background:#585858;"></div>
<div class="r" style="left:385.00px;top:173.50px;width:14.00px;height:1.40px;background:#585858;"></div>
<div class="r" style="left:375.50px;top:192.20px;width:157.70px;height:180.60px;border:2px solid #e81010;"></div>
<svg class="r" style="left:389px;top:199px;" width="24" height="18" viewBox="0 0 24 18"><rect x="0.5" y="0.5" width="23" height="17" fill="#fff" stroke="#7b7b7b"/><circle cx="7" cy="6.5" r="2.6" fill="#5e9c84"/><path d="M2.5 14.5 C2.5 10 11.5 10 11.5 14.5 Z" fill="#5e9c84"/><path d="M13.5 5 H21 M13.5 7.5 H21 M13.5 10 H21 M13.5 12.5 H21" stroke="#a9a9a9" stroke-width="1.3"/></svg>
<div class="t" style="left:421.30px;top:198.00px;font-size:9.5px;line-height:9.5px;color:#3a3a3a;font-weight:bold;font-style:normal;transform:scaleX(1.0420);transform-origin:0 0;">Patient</div>
<div class="t" style="left:421.30px;top:208.00px;font-size:9.5px;line-height:9.5px;color:#3a3a3a;font-weight:bold;font-style:normal;transform:scaleX(1.0719);transform-origin:0 0;">Information</div>
<svg class="r" style="left:511px;top:205px;" width="10" height="6" viewBox="0 0 10 6"><path d="M1 5 L5 1 L9 5" fill="none" stroke="#444" stroke-width="1"/></svg>
<div class="r" style="left:378.00px;top:225.00px;width:152.00px;height:1.00px;background:#d3d8de;"></div>
<div class="t" style="left:421.10px;top:232.00px;font-size:10px;line-height:10px;color:#303030;font-weight:normal;font-style:normal;transform:scaleX(0.8819);transform-origin:0 0;">Confinement</div>
<div class="t" style="left:421.10px;top:253.00px;font-size:10px;line-height:10px;color:#303030;font-weight:normal;font-style:normal;transform:scaleX(0.8654);transform-origin:0 0;">Diagnosis</div>
<div class="t" style="left:421.10px;top:274.00px;font-size:10px;line-height:10px;color:#303030;font-weight:normal;font-style:normal;transform:scaleX(0.8626);transform-origin:0 0;">Medical Packages</div>
<svg class="r" style="left:382px;top:290px" width="40" height="40" viewBox="382 290 40 40"><rect x="388.7" y="303.2" width="22" height="18.5" rx="1.5" fill="#f1f4fa" stroke="#7183ab" stroke-width="1"/><rect x="389.5" y="304" width="4.5" height="17" fill="#fff"/><path d="M394.3 303.2 V321.7" stroke="#7183ab" stroke-width="1"/><rect x="396.3" y="299.3" width="7.5" height="6" rx="1" fill="#fff" stroke="#8797bb" stroke-width=".9"/><path d="M396.3 304 H404.5 V308 Q404.5 309.3 403.2 309.3 H397.6 Q396.3 309.3 396.3 308 Z" fill="#4e5b80"/><rect x="397.8" y="312.2" width="1.6" height="1.5" fill="#3d4c7c"/><rect x="400.4" y="312.2" width="1.6" height="1.5" fill="#3d4c7c"/><rect x="403" y="312.2" width="1.6" height="1.5" fill="#3d4c7c"/><rect x="405.6" y="312.2" width="1.6" height="1.5" fill="#3d4c7c"/><rect x="397.8" y="314.8" width="1.6" height="1.5" fill="#3d4c7c"/><rect x="400.4" y="314.8" width="1.6" height="1.5" fill="#3d4c7c"/><rect x="403" y="314.8" width="1.6" height="1.5" fill="#3d4c7c"/><rect x="405.6" y="314.8" width="1.6" height="1.5" fill="#3d4c7c"/><rect x="397.8" y="317.4" width="1.6" height="1.5" fill="#3d4c7c"/><rect x="400.4" y="317.4" width="1.6" height="1.5" fill="#3d4c7c"/><rect x="403" y="317.4" width="1.6" height="1.5" fill="#3d4c7c"/><rect x="405.6" y="317.4" width="1.6" height="1.5" fill="#3d4c7c"/><circle cx="408.2" cy="303.8" r="6.2" fill="#7dbb30" stroke="#5a9420" stroke-width=".7"/><path d="M405.3 303.8 L407.4 306.2 L411.2 301.3" fill="none" stroke="#fff" stroke-width="1.4"/></svg>
<div class="t" style="left:421.30px;top:305.00px;font-size:9.5px;line-height:9.5px;color:#3a3a3a;font-weight:bold;font-style:normal;transform:scaleX(0.9774);transform-origin:0 0;">Medical Billing</div>
<svg class="r" style="left:511px;top:307px;" width="10" height="6" viewBox="0 0 10 6"><path d="M1 5 L5 1 L9 5" fill="none" stroke="#444" stroke-width="1"/></svg>
<div class="r" style="left:378.00px;top:328.00px;width:152.00px;height:1.00px;background:#d3d8de;"></div>
<div class="t" style="left:421.10px;top:335.00px;font-size:10px;line-height:10px;color:#303030;font-weight:normal;font-style:normal;transform:scaleX(0.8752);transform-origin:0 0;">Fees and Charges</div>
<div class="t" style="left:421.10px;top:355.00px;font-size:10px;line-height:10px;color:#303030;font-weight:normal;font-style:normal;transform:scaleX(0.8505);transform-origin:0 0;">Consumables</div>
<div class="r" style="left:378.00px;top:377.00px;width:152.00px;height:1.00px;background:#d3d8de;"></div>
<svg class="r" style="left:392px;top:386px;" width="16" height="27" viewBox="0 0 16 27"><path d="M11.5 7 V21 C11.5 25.5 4.5 25.5 4.5 21 V5 C4.5 1 10 1 10 5 V19 C10 21 6.5 21 6.5 19 V8" fill="none" stroke="#6f6f6f" stroke-width="1.5"/></svg>
<div class="t" style="left:421.10px;top:390.00px;font-size:10px;line-height:10px;color:#303030;font-weight:normal;font-style:normal;transform:scaleX(0.9160);transform-origin:0 0;">Attachments /</div>
<div class="t" style="left:421.10px;top:401.00px;font-size:10px;line-height:10px;color:#303030;font-weight:normal;font-style:normal;transform:scaleX(0.8502);transform-origin:0 0;">Documents</div>
<div class="r" style="left:378.00px;top:417.00px;width:152.00px;height:1.00px;background:#d3d8de;"></div>
<div class="t" style="left:545.50px;top:166.00px;font-size:10.5px;line-height:10.5px;color:#8a8a8a;font-weight:normal;font-style:normal;transform:scaleX(0.9438);transform-origin:0 0;">Claim No.</div>
<div class="t" style="left:626.20px;top:166.00px;font-size:10.5px;line-height:10.5px;color:#8a8a8a;font-weight:normal;font-style:normal;transform:scaleX(0.9120);transform-origin:0 0;">25-00001876-sample</div>
<div class="t" style="left:545.50px;top:188.00px;font-size:10.5px;line-height:10.5px;color:#8a8a8a;font-weight:normal;font-style:normal;transform:scaleX(0.9578);transform-origin:0 0;">Member Name</div>
<div class="t" style="left:626.20px;top:188.00px;font-size:10.5px;line-height:10.5px;color:#8a8a8a;font-weight:normal;font-style:normal;transform:scaleX(0.9003);transform-origin:0 0;">MMGHAHSC FN FIVE MMGHAHSC MN FIVE MMGHAHSC LN FIVE</div>
<div class="t" style="left:545.50px;top:206.00px;font-size:10.5px;line-height:10.5px;color:#8a8a8a;font-weight:normal;font-style:normal;transform:scaleX(0.9432);transform-origin:0 0;">Patient Name</div>
<div class="t" style="left:626.20px;top:206.00px;font-size:10.5px;line-height:10.5px;color:#8a8a8a;font-weight:normal;font-style:normal;transform:scaleX(0.9003);transform-origin:0 0;">MMGHAHSC FN FIVE MMGHAHSC MN FIVE MMGHAHSC LN FIVE</div>
<div class="r" style="left:1126px;top:163px;width:89px;height:16px;background:#fff;border:1px solid #e2e2e2;border-bottom-color:#cfcfcf;border-radius:3px"></div>
<svg class="r" style="left:1128px;top:162px;" width="14" height="17" viewBox="0 0 14 17"><rect x="3" y="1" width="8" height="5" fill="#fff" stroke="#3aa07a" stroke-width=".9"/><path d="M4 2.6 H10 M4 4.2 H10" stroke="#3aa07a" stroke-width=".6"/><rect x="1" y="6" width="12" height="6" rx="1.5" fill="#e8e8e8" stroke="#666" stroke-width="1"/><rect x="3" y="10" width="8" height="5" fill="#fff" stroke="#666" stroke-width="1"/><path d="M3 8.5 H11" stroke="#3d6fd1" stroke-width="1.2"/></svg>
<div class="t" style="left:1157.90px;top:167.00px;font-size:10px;line-height:10px;color:#333;font-weight:normal;font-style:normal;transform:scaleX(0.8131);transform-origin:0 0;">VIEW PDF</div>
<div class="r" style="left:534.50px;top:226.70px;width:691.50px;height:1.00px;background:#d9d9d9;"></div>
<div class="t" style="left:545.50px;top:241.00px;font-size:13px;line-height:13px;color:#3b7fc4;font-weight:bold;font-style:normal;transform:scaleX(0.9658);transform-origin:0 0;">Patient Confinement Information</div>
<div class="t" style="left:1016.40px;top:244.00px;font-size:11px;line-height:11px;color:#2d9a2d;font-weight:normal;font-style:italic;transform:scaleX(0.8798);transform-origin:0 0;">Successfully Saved!</div>
<div class="r" style="left:1139.70px;top:239.30px;width:75.30px;height:18.70px;background:#e8f8ea;border-radius:2px;"></div>
<svg class="r" style="left:1141px;top:240px;" width="18" height="18" viewBox="0 0 18 18"><path d="M0.5 0.5 H12.5 L17 5 V17 H0.5 Z" fill="#4d4d52"/><rect x="4.5" y="1.5" width="6" height="5.5" fill="#14d6e6"/><rect x="4.5" y="10.5" width="9.5" height="5.5" fill="#14d6e6"/></svg>
<div class="t" style="left:1174.60px;top:243.00px;font-size:11px;line-height:11px;color:#111;font-weight:bold;font-style:normal;transform:scaleX(0.8339);transform-origin:0 0;">SAVE</div>
<div class="t" style="left:548.90px;top:283.00px;font-size:12px;line-height:12px;color:#1b1b1b;font-weight:bold;font-style:normal;transform:scaleX(0.8978);transform-origin:0 0;">Name of Patient:</div>
<div class="t" style="left:656.70px;top:283.00px;font-size:12px;line-height:12px;color:#1b1b1b;font-weight:normal;font-style:normal;transform:scaleX(0.8533);transform-origin:0 0;">MMGHAHSC FN FIVE MMGHAHSC MN FIVE MMGHAHSC LN FIVE</div>
<div class="t" style="left:548.90px;top:328.00px;font-size:11.5px;line-height:11.5px;color:#1b1b1b;font-weight:bold;font-style:normal;transform:scaleX(0.9341);transform-origin:0 0;">Was patient referred by another Health Care Institution?</div>
<div class="r" style="left:846px;top:326.4px;width:13.6px;height:13.2px;background:#fff;border:1px solid #c4c4c4;border-radius:3px"></div>
<div class="t" style="left:862.60px;top:328.00px;font-size:10px;line-height:10px;color:#333;font-weight:normal;font-style:normal;transform:scaleX(0.9195);transform-origin:0 0;">Yes</div>
<div class="t" style="left:931.00px;top:328.00px;font-size:11.5px;line-height:11.5px;color:#1b1b1b;font-weight:bold;font-style:normal;transform:scaleX(0.8871);transform-origin:0 0;">Emergency</div>
<svg class="r" style="left:1015.1px;top:324.5px;" width="15" height="15" viewBox="0 0 15 15"><circle cx="7.5" cy="7.5" r="6" fill="#fff" stroke="#cfcfcf" stroke-width="1"/></svg>
<div class="t" style="left:1032.60px;top:328.00px;font-size:10px;line-height:10px;color:#333;font-weight:normal;font-style:normal;transform:scaleX(0.8449);transform-origin:0 0;">No</div>
<svg class="r" style="left:1083.5px;top:324.5px;" width="15" height="15" viewBox="0 0 15 15"><circle cx="7.5" cy="7.5" r="5.3" fill="#fff" stroke="#0a62c9" stroke-width="2.6"/></svg>
<div class="t" style="left:1101.00px;top:328.00px;font-size:10px;line-height:10px;color:#333;font-weight:normal;font-style:normal;transform:scaleX(0.8704);transform-origin:0 0;">Yes</div>
<div class="t" style="left:931.00px;top:356.00px;font-size:11.5px;line-height:11.5px;color:#1b1b1b;font-weight:bold;font-style:normal;transform:scaleX(0.9183);transform-origin:0 0;">Patient Type</div>
<svg class="r" style="left:1015.1px;top:353.5px;" width="15" height="15" viewBox="0 0 15 15"><circle cx="7.5" cy="7.5" r="5.3" fill="#fff" stroke="#0a62c9" stroke-width="2.6"/></svg>
<div class="t" style="left:1032.60px;top:357.00px;font-size:10px;line-height:10px;color:#333;font-weight:normal;font-style:normal;transform:scaleX(0.9489);transform-origin:0 0;">Inpatient</div>
<svg class="r" style="left:1083.5px;top:353.5px;" width="15" height="15" viewBox="0 0 15 15"><circle cx="7.5" cy="7.5" r="6" fill="#fff" stroke="#cfcfcf" stroke-width="1"/></svg>
<div class="t" style="left:1101.00px;top:357.00px;font-size:10px;line-height:10px;color:#333;font-weight:normal;font-style:normal;transform:scaleX(0.9406);transform-origin:0 0;">Outpatient</div>
<div class="t" style="left:549.00px;top:408.00px;font-size:11.5px;line-height:11.5px;color:#1b1b1b;font-weight:bold;font-style:normal;transform:scaleX(0.9181);transform-origin:0 0;">Confinement Period</div>
<div class="t" style="left:667.00px;top:408.00px;font-size:11.5px;line-height:11.5px;color:#3a3a3a;font-weight:normal;font-style:italic;transform:scaleX(0.9211);transform-origin:0 0;">a. Date Admitted</div>
<div class="t" style="left:667.00px;top:437.00px;font-size:11.5px;line-height:11.5px;color:#3a3a3a;font-weight:normal;font-style:italic;transform:scaleX(0.8999);transform-origin:0 0;">c. Date Discharged</div>
<div class="t" style="left:928.75px;top:408.00px;font-size:11.5px;line-height:11.5px;color:#3a3a3a;font-weight:normal;font-style:italic;transform:scaleX(0.9116);transform-origin:0 0;">b. Time Admitted</div>
<div class="t" style="left:928.75px;top:437.00px;font-size:11.5px;line-height:11.5px;color:#3a3a3a;font-weight:normal;font-style:italic;transform:scaleX(0.8936);transform-origin:0 0;">d. Time Discharged</div>
<div class="r" style="left:777.5px;top:404px;width:137.3px;height:17.5px;background:#fff;border:1px solid #dedede;border-bottom:1px solid #a9a9a9;border-radius:3px"></div>
<div class="t" style="left:780.00px;top:409.00px;font-size:10px;line-height:10px;color:#222;font-weight:normal;font-style:normal;transform:scaleX(0.9189);transform-origin:0 0;">07-25-2025</div>
<svg class="r" style="left:901px;top:409.5px;" width="9" height="6" viewBox="0 0 9 6"><path d="M1 1 L4.5 4.5 L8 1" fill="none" stroke="#333" stroke-width="1.1"/></svg>
<div class="r" style="left:777.5px;top:432.5px;width:137.3px;height:17.5px;background:#fff;border:1px solid #dedede;border-bottom:1px solid #a9a9a9;border-radius:3px"></div>
<div class="t" style="left:780.00px;top:438.00px;font-size:10px;line-height:10px;color:#222;font-weight:normal;font-style:normal;transform:scaleX(0.9189);transform-origin:0 0;">07-27-2025</div>
<svg class="r" style="left:901px;top:438.0px;" width="9" height="6" viewBox="0 0 9 6"><path d="M1 1 L4.5 4.5 L8 1" fill="none" stroke="#333" stroke-width="1.1"/></svg>
<div class="r" style="left:1035.2px;top:403px;width:150.5px;height:19.0px;background:#fff;border:1px solid #dedede;border-bottom:1px solid #a9a9a9;border-radius:3px"></div>
<div class="t" style="left:1038.00px;top:409.00px;font-size:10px;line-height:10px;color:#222;font-weight:normal;font-style:normal;transform:scaleX(0.9439);transform-origin:0 0;">01:00:00 AM</div>
<svg class="r" style="left:1172px;top:406px;" width="9" height="13" viewBox="0 0 9 13"><path d="M1 4.5 L4.5 1 L8 4.5 M1 8.5 L4.5 12 L8 8.5" fill="none" stroke="#333" stroke-width="1.1"/></svg>
<div class="r" style="left:1035.2px;top:431.5px;width:150.5px;height:19.0px;background:#fff;border:1px solid #dedede;border-bottom:1px solid #a9a9a9;border-radius:3px"></div>
<div class="t" style="left:1038.00px;top:438.00px;font-size:10px;line-height:10px;color:#222;font-weight:normal;font-style:normal;transform:scaleX(0.9566);transform-origin:0 0;">11:00:00 AM</div>
<svg class="r" style="left:1172px;top:434.5px;" width="9" height="13" viewBox="0 0 9 13"><path d="M1 4.5 L4.5 1 L8 4.5 M1 8.5 L4.5 12 L8 8.5" fill="none" stroke="#333" stroke-width="1.1"/></svg>
<div class="t" style="left:549.10px;top:477.00px;font-size:11.5px;line-height:11.5px;color:#1b1b1b;font-weight:bold;font-style:normal;transform:scaleX(0.9026);transform-origin:0 0;">Patient Disposition</div>
<svg class="r" style="left:551.8px;top:503.7px;" width="15" height="15" viewBox="0 0 15 15"><circle cx="7.5" cy="7.5" r="5.3" fill="#fff" stroke="#0a62c9" stroke-width="2.6"/></svg>
<div class="t" style="left:568.90px;top:507.00px;font-size:10px;line-height:10px;color:#333;font-weight:normal;font-style:normal;transform:scaleX(0.9237);transform-origin:0 0;">Improved</div>
<svg class="r" style="left:551.8px;top:527.1px;" width="15" height="15" viewBox="0 0 15 15"><circle cx="7.5" cy="7.5" r="6" fill="#fff" stroke="#cfcfcf" stroke-width="1"/></svg>
<div class="t" style="left:568.90px;top:530.00px;font-size:10px;line-height:10px;color:#333;font-weight:normal;font-style:normal;transform:scaleX(0.8996);transform-origin:0 0;">Recovered</div>
<svg class="r" style="left:551.8px;top:550.3px;" width="15" height="15" viewBox="0 0 15 15"><circle cx="7.5" cy="7.5" r="6" fill="#fff" stroke="#cfcfcf" stroke-width="1"/></svg>
<div class="t" style="left:568.90px;top:553.00px;font-size:10px;line-height:10px;color:#333;font-weight:normal;font-style:normal;transform:scaleX(0.8796);transform-origin:0 0;">Home/Discharged Against Medical Advice</div>
<svg class="r" style="left:551.8px;top:573.9px;" width="15" height="15" viewBox="0 0 15 15"><circle cx="7.5" cy="7.5" r="6" fill="#fff" stroke="#cfcfcf" stroke-width="1"/></svg>
<div class="t" style="left:568.90px;top:577.00px;font-size:10px;line-height:10px;color:#333;font-weight:normal;font-style:normal;transform:scaleX(0.8794);transform-origin:0 0;">Absconded</div>
<svg class="r" style="left:551.8px;top:597.0px;" width="15" height="15" viewBox="0 0 15 15"><circle cx="7.5" cy="7.5" r="6" fill="#fff" stroke="#cfcfcf" stroke-width="1"/></svg>
<div class="t" style="left:568.90px;top:600.00px;font-size:10px;line-height:10px;color:#333;font-weight:normal;font-style:normal;transform:scaleX(0.8701);transform-origin:0 0;">Expired</div>
<svg class="r" style="left:551.8px;top:620.2px;" width="15" height="15" viewBox="0 0 15 15"><circle cx="7.5" cy="7.5" r="6" fill="#fff" stroke="#cfcfcf" stroke-width="1"/></svg>
<div class="t" style="left:568.90px;top:623.00px;font-size:10px;line-height:10px;color:#333;font-weight:normal;font-style:normal;transform:scaleX(0.9171);transform-origin:0 0;">Transfered</div>
<div class="t" style="left:550.90px;top:680.00px;font-size:11.5px;line-height:11.5px;color:#1b1b1b;font-weight:bold;font-style:normal;transform:scaleX(0.9163);transform-origin:0 0;">Type of Accomodation</div>
<svg class="r" style="left:675.2px;top:677.1px;" width="15" height="15" viewBox="0 0 15 15"><circle cx="7.5" cy="7.5" r="5.3" fill="#fff" stroke="#0a62c9" stroke-width="2.6"/></svg>
<div class="t" style="left:692.60px;top:680.00px;font-size:10px;line-height:10px;color:#333;font-weight:normal;font-style:normal;transform:scaleX(0.9158);transform-origin:0 0;">Private</div>
<svg class="r" style="left:675.2px;top:699.7px;" width="15" height="15" viewBox="0 0 15 15"><circle cx="7.5" cy="7.5" r="6" fill="#fff" stroke="#cfcfcf" stroke-width="1"/></svg>
<div class="t" style="left:692.60px;top:703.00px;font-size:10px;line-height:10px;color:#333;font-weight:normal;font-style:normal;transform:scaleX(0.9060);transform-origin:0 0;">Non-Private (Charity/Service)</div>
<div class="r" style="left:538.60px;top:165.60px;width:681.20px;height:567.30px;border:2px solid #e81010;"></div>
<div class="t" style="left:466.5px;top:130.5px;font-size:32.5px;line-height:32.5px;font-weight:bold;color:#ff0000;letter-spacing:1.4px;text-shadow:0 0 2px #fff,0 0 2px #fff">2.4</div>
<svg class="r" style="left:462px;top:160px;" width="22" height="26" viewBox="0 0 22 26"><path d="M2.5 23.5 L19.5 1.5" stroke="#ff0000" stroke-width="3"/></svg>
<div class="t" style="left:754.5px;top:93.7px;font-size:32.5px;line-height:32.5px;font-weight:bold;color:#ff0000;letter-spacing:1px;text-shadow:0 0 2px #fff,0 0 2px #fff">2.5</div>
<div class="r" style="left:777.00px;top:125.00px;width:2.00px;height:17.70px;background:#ff0000;"></div>
</body></html>
